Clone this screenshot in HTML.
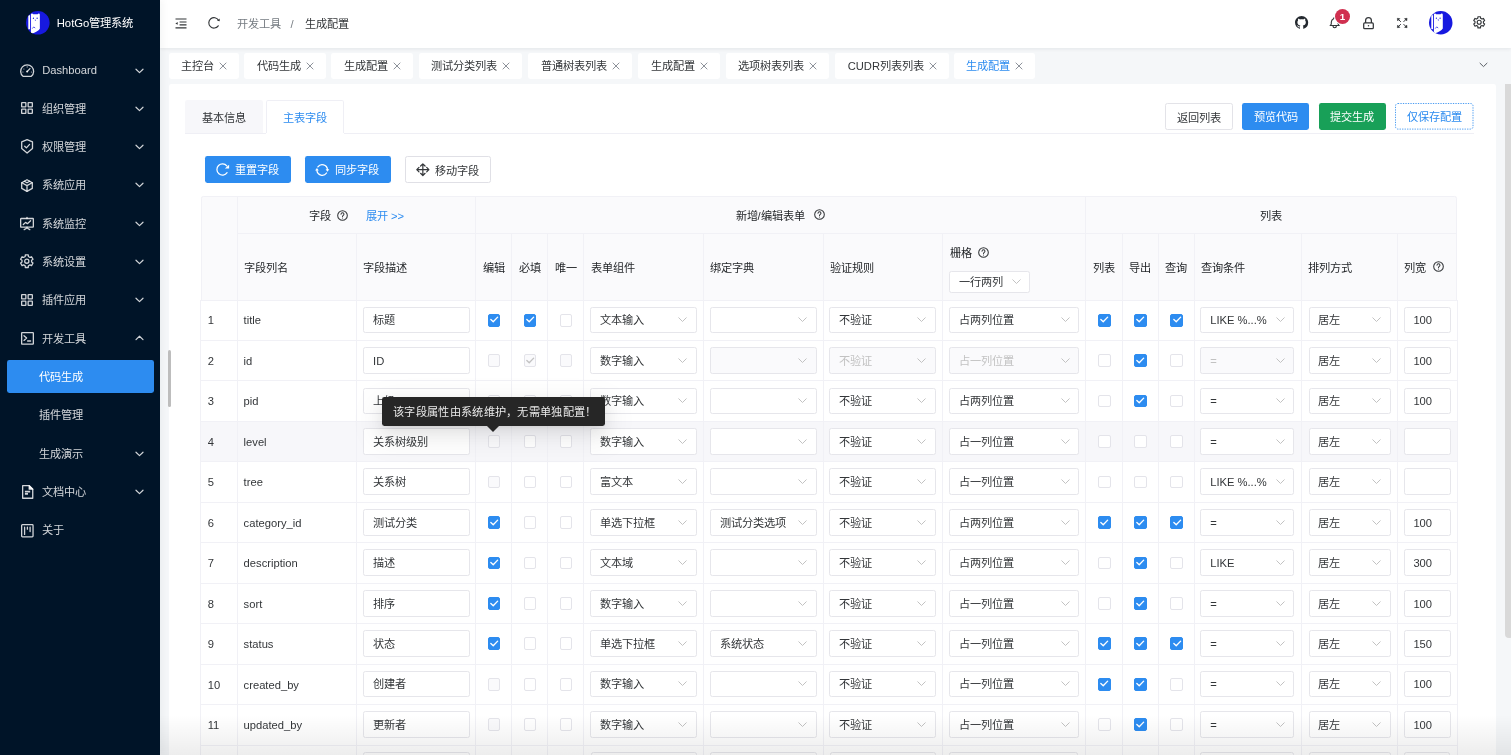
<!DOCTYPE html><html lang="zh-CN"><head><meta charset="utf-8"><style>
*{box-sizing:border-box;margin:0;padding:0}
html,body{width:1511px;height:755px;overflow:hidden}
body{position:relative;background:#f5f7f9;font-family:"Liberation Sans",sans-serif;font-size:11.2px;color:#333639;line-height:1}
.root{position:absolute;left:0;top:0;width:1511px;height:755px;overflow:hidden;will-change:transform}
.abs{position:absolute}
.t{position:absolute;white-space:nowrap;line-height:14px;margin-top:.5px}
svg{position:absolute;overflow:visible}
.sider{position:absolute;left:0;top:0;width:160px;height:755px;background:#001428;color:rgba(255,255,255,.82);box-shadow:2px 0 8px rgba(29,35,41,.05);z-index:3}
.mi{position:absolute;left:0;width:160px;height:33.6px;color:rgba(255,255,255,.82)}
.mi .t{top:9.8px}
.header{position:absolute;left:160px;top:0;width:1351px;height:48px;background:#fff;box-shadow:0 1px 4px rgba(0,21,41,.08);z-index:2}
.tag{position:absolute;top:53px;height:25.6px;background:#fff;border-radius:2.4px}
.card{position:absolute;left:169px;top:84px;width:1327px;height:700px;background:#fff;border-radius:2.4px}
.btn{position:absolute;height:26.6px;border-radius:2.4px;color:#fff}
.btn .t{top:6.2px}
.cell{position:absolute;border-right:1px solid #efeff5;border-bottom:1px solid #efeff5}
.inp{position:absolute;height:26.8px;border:1px solid #e6e6eb;border-radius:2.4px;background:#fff}
.inp.dis{background:#fafafc}
.inp .t{top:5.4px;left:8.8px}
.cb{position:absolute;width:12.8px;height:12.8px;border:1px solid #e4e4ea;border-radius:2px;background:#fff}
.cb.dis{background:#fafafc}
.cb.on{background:#2d8cf0;border-color:#2d8cf0}
</style></head><body><div class="root">
<div class="sider">
<svg style="left:26.2px;top:10.8px" width="23.6" height="23.6" viewBox="0 0 23.5 23.5"><defs><clipPath id="c26"><circle cx="11.75" cy="11.75" r="11.75"/></clipPath></defs><circle cx="11.75" cy="11.75" r="11.75" fill="#1719e0"/><g clip-path="url(#c26)"><rect x="2.3" y="4.2" width="1.9" height="14" fill="#fff"/><path d="M4.9 4.3 C4.6 2.6 6.4 2 7.2 3.2 L11.6 3.2 C12.3 2 14.1 2.5 13.8 4.3 L13.8 17.6 C12.5 19.8 9.5 21.2 5.5 22.6 L4.9 22.6 Z" fill="#fff"/><circle cx="7.4" cy="7.2" r=".65" fill="#1719e0"/><circle cx="11.1" cy="7.2" r=".65" fill="#1719e0"/><path d="M8.6 8.6 H9.9 L9.25 9.9Z" fill="#1719e0"/><rect x="4.4" y="4" width=".6" height="14.5" fill="#1719e0"/><path d="M6.3 17.5 Q7.6 14.5 9.2 17" stroke="#1719e0" stroke-width=".7" fill="none"/></g></svg>
<div class="t" style="left:56.7px;top:15.5px;color:#fff;font-size:11.3px">HotGo管理系统</div>
<svg style="left:20.1px;top:63.8px" width="14.3" height="13" viewBox="0 0 14.3 13"><path d="M3 12.35 A6.5 6.5 0 1 1 11.3 12.35 Z" stroke="rgba(255,255,255,.82)" stroke-width="1.3" fill="none" stroke-linecap="round" stroke-linejoin="round"/><path d="M7.15 7.6 L9.9 4.6" stroke="rgba(255,255,255,.82)" stroke-width="1.3" fill="none" stroke-linecap="round" stroke-linejoin="round"/><circle cx="7.15" cy="7.6" r="1" fill="rgba(255,255,255,.82)"/><circle cx="7.15" cy="2.9" r=".55" fill="rgba(255,255,255,.82)"/><circle cx="3.9" cy="5" r=".55" fill="rgba(255,255,255,.82)"/><circle cx="2.9" cy="8" r=".55" fill="rgba(255,255,255,.82)"/><circle cx="11.4" cy="8" r=".55" fill="rgba(255,255,255,.82)"/></svg>
<div class="t" style="left:42.2px;top:62.1px">Dashboard</div>
<svg style="left:135.4px;top:67.5px" width="9" height="6.5" viewBox="0 0 9 6.5"><path d="M1 1.2 L4.5 4.6 L8 1.2" stroke="rgba(255,255,255,.82)" stroke-width="1.2" fill="none" stroke-linecap="round" stroke-linejoin="round"/></svg>
<svg style="left:21.1px;top:102.1px" width="12.2" height="12.2" viewBox="0 0 12.2 12.2"><rect x=".65" y=".65" width="4.2" height="4.2" rx=".4" stroke="rgba(255,255,255,.82)" stroke-width="1.3" fill="none" stroke-linecap="round" stroke-linejoin="round"/><rect x="7.15" y=".65" width="4.2" height="4.2" rx=".4" stroke="rgba(255,255,255,.82)" stroke-width="1.3" fill="none" stroke-linecap="round" stroke-linejoin="round"/><rect x=".65" y="7.15" width="4.2" height="4.2" rx=".4" stroke="rgba(255,255,255,.82)" stroke-width="1.3" fill="none" stroke-linecap="round" stroke-linejoin="round"/><rect x="7.15" y="7.15" width="4.2" height="4.2" rx=".4" stroke="rgba(255,255,255,.82)" stroke-width="1.3" fill="none" stroke-linecap="round" stroke-linejoin="round"/></svg>
<div class="t" style="left:42.2px;top:101.3px">组织管理</div>
<svg style="left:135.4px;top:105.8px" width="9" height="6.5" viewBox="0 0 9 6.5"><path d="M1 1.2 L4.5 4.6 L8 1.2" stroke="rgba(255,255,255,.82)" stroke-width="1.2" fill="none" stroke-linecap="round" stroke-linejoin="round"/></svg>
<svg style="left:20.9px;top:139.2px" width="12.2" height="14.7" viewBox="0 0 12.2 14.7"><path d="M6.1 .7 L11.5 2.9 V9.6 L6.1 14 L.7 9.6 V2.9 Z" stroke="rgba(255,255,255,.82)" stroke-width="1.3" fill="none" stroke-linecap="round" stroke-linejoin="round"/><path d="M3.7 7.2 L5.4 8.9 L8.6 5.4" stroke="rgba(255,255,255,.82)" stroke-width="1.3" fill="none" stroke-linecap="round" stroke-linejoin="round"/></svg>
<div class="t" style="left:42.2px;top:139.6px">权限管理</div>
<svg style="left:135.4px;top:144.1px" width="9" height="6.5" viewBox="0 0 9 6.5"><path d="M1 1.2 L4.5 4.6 L8 1.2" stroke="rgba(255,255,255,.82)" stroke-width="1.2" fill="none" stroke-linecap="round" stroke-linejoin="round"/></svg>
<svg style="left:21.2px;top:178.5px" width="12" height="13.1" viewBox="0 0 12 13.1"><path d="M6 .7 L11.3 3.7 V9.4 L6 12.4 L.7 9.4 V3.7 Z" stroke="rgba(255,255,255,.82)" stroke-width="1.3" fill="none" stroke-linecap="round" stroke-linejoin="round"/><path d="M.9 3.8 L6 6.6 L11.1 3.8 M6 6.6 V12.2" stroke="rgba(255,255,255,.82)" stroke-width="1.3" fill="none" stroke-linecap="round" stroke-linejoin="round"/><path d="M3.3 2.3 L6 3.8 L8.7 2.3" stroke="rgba(255,255,255,.82)" stroke-width="1.3" fill="none" stroke-linecap="round" stroke-linejoin="round"/></svg>
<div class="t" style="left:42.2px;top:177.9px">系统应用</div>
<svg style="left:135.4px;top:182.4px" width="9" height="6.5" viewBox="0 0 9 6.5"><path d="M1 1.2 L4.5 4.6 L8 1.2" stroke="rgba(255,255,255,.82)" stroke-width="1.2" fill="none" stroke-linecap="round" stroke-linejoin="round"/></svg>
<svg style="left:20.4px;top:217.0px" width="14" height="13.2" viewBox="0 0 14 13.2"><rect x=".65" y="1.5" width="12.7" height="8.6" rx=".4" stroke="rgba(255,255,255,.82)" stroke-width="1.3" fill="none" stroke-linecap="round" stroke-linejoin="round"/><path d="M7 .5 V1.5 M7 10.1 V11.2 M4.2 12.6 L7 11 L9.8 12.6 M3.3 7.6 L5.6 5.4 L7.4 6.7 L10.6 3.7" stroke="rgba(255,255,255,.82)" stroke-width="1.3" fill="none" stroke-linecap="round" stroke-linejoin="round"/></svg>
<div class="t" style="left:42.2px;top:216.2px">系统监控</div>
<svg style="left:135.4px;top:220.7px" width="9" height="6.5" viewBox="0 0 9 6.5"><path d="M1 1.2 L4.5 4.6 L8 1.2" stroke="rgba(255,255,255,.82)" stroke-width="1.2" fill="none" stroke-linecap="round" stroke-linejoin="round"/></svg>
<svg style="left:20.4px;top:254.3px" width="13.6" height="14.3" viewBox="0 0 13.6 14.3"><path d="M5.20 2.52 L5.34 0.82 L8.26 0.82 L8.40 2.52 L10.01 3.45 L11.55 2.72 L13.02 5.25 L11.61 6.22 L11.61 8.08 L13.02 9.05 L11.55 11.58 L10.01 10.85 L8.40 11.78 L8.26 13.48 L5.34 13.48 L5.20 11.78 L3.59 10.85 L2.05 11.58 L0.58 9.05 L1.99 8.08 L1.99 6.22 L0.58 5.25 L2.05 2.72 L3.59 3.45Z" stroke="rgba(255,255,255,.82)" stroke-width="1.3" fill="none" stroke-linecap="round" stroke-linejoin="round"/><circle cx="6.8" cy="7.15" r="2.1" stroke="rgba(255,255,255,.82)" stroke-width="1.3" fill="none" stroke-linecap="round" stroke-linejoin="round"/></svg>
<div class="t" style="left:42.2px;top:254.5px">系统设置</div>
<svg style="left:135.4px;top:259.0px" width="9" height="6.5" viewBox="0 0 9 6.5"><path d="M1 1.2 L4.5 4.6 L8 1.2" stroke="rgba(255,255,255,.82)" stroke-width="1.2" fill="none" stroke-linecap="round" stroke-linejoin="round"/></svg>
<svg style="left:21.1px;top:294.3px" width="12.2" height="12.2" viewBox="0 0 12.2 12.2"><rect x=".65" y=".65" width="4.2" height="4.2" rx=".4" stroke="rgba(255,255,255,.82)" stroke-width="1.3" fill="none" stroke-linecap="round" stroke-linejoin="round"/><rect x="7.15" y=".65" width="4.2" height="4.2" rx=".4" stroke="rgba(255,255,255,.82)" stroke-width="1.3" fill="none" stroke-linecap="round" stroke-linejoin="round"/><rect x=".65" y="7.15" width="4.2" height="4.2" rx=".4" stroke="rgba(255,255,255,.82)" stroke-width="1.3" fill="none" stroke-linecap="round" stroke-linejoin="round"/><rect x="7.15" y="7.15" width="4.2" height="4.2" rx=".4" stroke="rgba(255,255,255,.82)" stroke-width="1.3" fill="none" stroke-linecap="round" stroke-linejoin="round"/></svg>
<div class="t" style="left:42.2px;top:292.8px">插件应用</div>
<svg style="left:135.4px;top:297.3px" width="9" height="6.5" viewBox="0 0 9 6.5"><path d="M1 1.2 L4.5 4.6 L8 1.2" stroke="rgba(255,255,255,.82)" stroke-width="1.2" fill="none" stroke-linecap="round" stroke-linejoin="round"/></svg>
<svg style="left:20.8px;top:332.2px" width="13" height="12.8" viewBox="0 0 13 12.8"><rect x=".65" y=".65" width="11.7" height="11.5" rx=".5" stroke="rgba(255,255,255,.82)" stroke-width="1.3" fill="none" stroke-linecap="round" stroke-linejoin="round"/><path d="M3 3.8 L5.6 6.1 L3 8.4 M6.6 9 H9.6" stroke="rgba(255,255,255,.82)" stroke-width="1.3" fill="none" stroke-linecap="round" stroke-linejoin="round"/></svg>
<div class="t" style="left:42.2px;top:331.1px">开发工具</div>
<svg style="left:135.4px;top:335.3px" width="9" height="6.5" viewBox="0 0 9 6.5"><path d="M1 4.6 L4.5 1.2 L8 4.6" stroke="rgba(255,255,255,.82)" stroke-width="1.2" fill="none" stroke-linecap="round" stroke-linejoin="round"/></svg>
<div class="abs" style="left:6.9px;top:360px;width:147px;height:33.2px;background:#2d8cf0;border-radius:2.4px"></div>
<div class="t" style="left:38.8px;top:369.4px;color:#fff">代码生成</div>
<div class="t" style="left:38.8px;top:407.7px">插件管理</div>
<div class="t" style="left:38.8px;top:446.0px">生成演示</div>
<svg style="left:135.4px;top:450.5px" width="9" height="6.5" viewBox="0 0 9 6.5"><path d="M1 1.2 L4.5 4.6 L8 1.2" stroke="rgba(255,255,255,.82)" stroke-width="1.2" fill="none" stroke-linecap="round" stroke-linejoin="round"/></svg>
<svg style="left:21.7px;top:485.2px" width="11.4" height="13.9" viewBox="0 0 11.4 13.9"><path d="M.65 .65 H7.2 L10.75 4.2 V13.25 H.65 Z" stroke="rgba(255,255,255,.82)" stroke-width="1.3" fill="none" stroke-linecap="round" stroke-linejoin="round"/><path d="M7.2 .65 V4.2 H10.75 Z" fill="rgba(255,255,255,.82)" stroke="rgba(255,255,255,.82)" stroke-width="1.3" fill="none" stroke-linecap="round" stroke-linejoin="round"/><path d="M2.9 6.6 H8.2 M2.9 8.9 H6" stroke="rgba(255,255,255,.82)" stroke-width="1.6"/></svg>
<div class="t" style="left:42.2px;top:484.3px">文档中心</div>
<svg style="left:135.4px;top:488.8px" width="9" height="6.5" viewBox="0 0 9 6.5"><path d="M1 1.2 L4.5 4.6 L8 1.2" stroke="rgba(255,255,255,.82)" stroke-width="1.2" fill="none" stroke-linecap="round" stroke-linejoin="round"/></svg>
<svg style="left:20.9px;top:523.7px" width="12.7" height="13.5" viewBox="0 0 12.7 13.5"><rect x=".65" y=".65" width="11.4" height="12.2" rx=".8" stroke="rgba(255,255,255,.82)" stroke-width="1.3" fill="none" stroke-linecap="round" stroke-linejoin="round"/><path d="M3.6 3.2 V10.4 M6.4 3.2 V5.2 M9.1 3.2 V7.6" stroke="rgba(255,255,255,.82)" stroke-width="1.3" fill="none" stroke-linecap="round" stroke-linejoin="round"/></svg>
<div class="t" style="left:42.2px;top:522.6px">关于</div>
</div>
<div class="header">
<svg style="left:14.5px;top:17.5px" width="12" height="11" viewBox="0 0 12 11"><path d="M.5 1H11.5M4.6 3.95H11.5M4.6 6.9H11.5M.5 9.9H11.5" stroke="#333639" stroke-width="1.1" fill="none"/><path d="M.4 5.45 L2.7 4.1 V6.8Z" fill="#333639"/></svg>
<svg style="left:47px;top:16px" width="14" height="14" viewBox="0 0 14 14"><path d="M11.5 4.25 A5.2 5.2 0 1 0 11.26 9.83" stroke="#333639" stroke-width="1.15" fill="none" stroke-linecap="round"/><path d="M10 4.7 L12.7 2.5 L12.7 5.3Z" fill="#333639"/></svg>
<div class="t" style="left:77.1px;top:16px;color:#767c82">开发工具</div>
<div class="t" style="left:130.5px;top:16px;color:#767c82">/</div>
<div class="t" style="left:145px;top:16px;color:#333639">生成配置</div>
<svg style="left:1134.8px;top:16.1px" width="13.2" height="13.2" viewBox="0 0 16 16"><path fill="#24292f" d="M8 0C3.58 0 0 3.58 0 8c0 3.54 2.29 6.53 5.47 7.59.4.07.55-.17.55-.38 0-.19-.01-.82-.01-1.49-2.01.37-2.53-.49-2.69-.94-.09-.23-.48-.94-.82-1.13-.28-.15-.68-.52-.01-.53.63-.01 1.08.58 1.23.82.72 1.21 1.87.87 2.33.66.07-.52.28-.87.51-1.07-1.78-.2-3.64-.89-3.64-3.95 0-.87.31-1.59.82-2.15-.08-.2-.36-1.02.08-2.12 0 0 .67-.21 2.2.82.64-.18 1.32-.27 2-.27.68 0 1.36.09 2 .27 1.53-1.04 2.2-.82 2.2-.82.44 1.1.16 1.92.08 2.12.51.56.82 1.27.82 2.15 0 3.07-1.87 3.75-3.65 3.95.29.25.54.73.54 1.48 0 1.07-.01 1.93-.01 2.2 0 .21.15.46.55.38A8.013 8.013 0 0016 8c0-4.42-3.58-8-8-8z"/></svg>
<svg style="left:1168.6px;top:17.4px" width="11.4" height="11.6" viewBox="3 2 18 20.5"><path d="M10 5a2 2 0 1 1 4 0a7 7 0 0 1 4 6v3a4 4 0 0 0 2 3h-16a4 4 0 0 0 2 -3v-3a7 7 0 0 1 4 -6" stroke="#333639" stroke-width="2" fill="none" stroke-linecap="round" stroke-linejoin="round"/><path d="M9 17v1a3 3 0 0 0 6 0v-1" stroke="#333639" stroke-width="2" fill="none" stroke-linecap="round" stroke-linejoin="round"/></svg>
<div class="abs" style="left:1174.9px;top:9.4px;width:15px;height:15px;border-radius:50%;background:#d03050;color:#fff;font-size:9.8px;font-weight:bold;text-align:center;line-height:15px;box-shadow:0 0 0 1px #fff">1</div>
<svg style="left:1203px;top:16.8px" width="11" height="12.4" viewBox="0 0 11 12.4"><rect x=".7" y="5.9" width="9.6" height="5.8" rx="1" stroke="#333639" stroke-width="1.25" fill="none"/><path d="M2.6 5.9 V3.6 A2.9 2.9 0 0 1 8.4 3.6 V5.9" stroke="#333639" stroke-width="1.25" fill="none"/><circle cx="5.5" cy="8.8" r=".75" fill="#333639"/></svg>
<svg style="left:1237px;top:17.9px" width="10.4" height="10" viewBox="0 0 10.4 10"><path d="M.3 .3 L2.9 .6 L.6 2.9Z M10.1 .3 L7.5 .6 L9.8 2.9Z M.3 9.7 L2.9 9.4 L.6 7.1Z M10.1 9.7 L7.5 9.4 L9.8 7.1Z" fill="#333639" stroke="#333639" stroke-width=".5" stroke-linejoin="round"/><path d="M1.2 1.2 L3.6 3.6 M9.2 1.2 L6.8 3.6 M1.2 8.8 L3.6 6.4 M9.2 8.8 L6.8 6.4" stroke="#333639" stroke-width="1" fill="none" stroke-linecap="round"/></svg>
<svg style="left:1269.0px;top:10.6px" width="23.5" height="23.5" viewBox="0 0 23.5 23.5"><defs><clipPath id="c1269"><circle cx="11.75" cy="11.75" r="11.75"/></clipPath></defs><circle cx="11.75" cy="11.75" r="11.75" fill="#1719e0"/><g clip-path="url(#c1269)"><rect x="2.3" y="4.2" width="1.9" height="14" fill="#fff"/><path d="M4.9 4.3 C4.6 2.6 6.4 2 7.2 3.2 L11.6 3.2 C12.3 2 14.1 2.5 13.8 4.3 L13.8 17.6 C12.5 19.8 9.5 21.2 5.5 22.6 L4.9 22.6 Z" fill="#fff"/><circle cx="7.4" cy="7.2" r=".65" fill="#1719e0"/><circle cx="11.1" cy="7.2" r=".65" fill="#1719e0"/><path d="M8.6 8.6 H9.9 L9.25 9.9Z" fill="#1719e0"/><rect x="4.4" y="4" width=".6" height="14.5" fill="#1719e0"/><path d="M6.3 17.5 Q7.6 14.5 9.2 17" stroke="#1719e0" stroke-width=".7" fill="none"/></g></svg>
<svg style="left:1312.6px;top:16.4px" width="12.4" height="12.6" viewBox="0 0 12.4 12.6"><path d="M4.80 2.23 L4.92 0.75 L7.48 0.75 L7.60 2.23 L9.02 3.05 L10.37 2.41 L11.65 4.63 L10.42 5.48 L10.42 7.12 L11.65 7.97 L10.37 10.19 L9.02 9.55 L7.60 10.37 L7.48 11.85 L4.92 11.85 L4.80 10.37 L3.38 9.55 L2.03 10.19 L0.75 7.97 L1.98 7.12 L1.98 5.48 L0.75 4.63 L2.03 2.41 L3.38 3.05Z" stroke="#333639" stroke-width="1.15" fill="none" stroke-linejoin="round"/><circle cx="6.2" cy="6.3" r="2" stroke="#333639" stroke-width="1.15" fill="none"/></svg>
</div>
<div class="tag" style="left:168.5px;display:flex;align-items:center;padding:0 12.2px 0 12.7px;color:#333639"><span style="line-height:14px;white-space:nowrap">主控台</span>
<svg style="position:relative;margin-left:5px;top:0.6px" width="8" height="8" viewBox="0 0 8 8"><path d="M.7 .7L7.3 7.3M7.3 .7L.7 7.3" stroke="#80868e" stroke-width=".9" fill="none"/></svg>
</div>
<div class="tag" style="left:244.2px;display:flex;align-items:center;padding:0 12.2px 0 12.7px;color:#333639"><span style="line-height:14px;white-space:nowrap">代码生成</span>
<svg style="position:relative;margin-left:5px;top:0.6px" width="8" height="8" viewBox="0 0 8 8"><path d="M.7 .7L7.3 7.3M7.3 .7L.7 7.3" stroke="#80868e" stroke-width=".9" fill="none"/></svg>
</div>
<div class="tag" style="left:331.3px;display:flex;align-items:center;padding:0 12.2px 0 12.7px;color:#333639"><span style="line-height:14px;white-space:nowrap">生成配置</span>
<svg style="position:relative;margin-left:5px;top:0.6px" width="8" height="8" viewBox="0 0 8 8"><path d="M.7 .7L7.3 7.3M7.3 .7L.7 7.3" stroke="#80868e" stroke-width=".9" fill="none"/></svg>
</div>
<div class="tag" style="left:418.6px;display:flex;align-items:center;padding:0 12.2px 0 12.7px;color:#333639"><span style="line-height:14px;white-space:nowrap">测试分类列表</span>
<svg style="position:relative;margin-left:5px;top:0.6px" width="8" height="8" viewBox="0 0 8 8"><path d="M.7 .7L7.3 7.3M7.3 .7L.7 7.3" stroke="#80868e" stroke-width=".9" fill="none"/></svg>
</div>
<div class="tag" style="left:528.0px;display:flex;align-items:center;padding:0 12.2px 0 12.7px;color:#333639"><span style="line-height:14px;white-space:nowrap">普通树表列表</span>
<svg style="position:relative;margin-left:5px;top:0.6px" width="8" height="8" viewBox="0 0 8 8"><path d="M.7 .7L7.3 7.3M7.3 .7L.7 7.3" stroke="#80868e" stroke-width=".9" fill="none"/></svg>
</div>
<div class="tag" style="left:638.1px;display:flex;align-items:center;padding:0 12.2px 0 12.7px;color:#333639"><span style="line-height:14px;white-space:nowrap">生成配置</span>
<svg style="position:relative;margin-left:5px;top:0.6px" width="8" height="8" viewBox="0 0 8 8"><path d="M.7 .7L7.3 7.3M7.3 .7L.7 7.3" stroke="#80868e" stroke-width=".9" fill="none"/></svg>
</div>
<div class="tag" style="left:725.5px;display:flex;align-items:center;padding:0 12.2px 0 12.7px;color:#333639"><span style="line-height:14px;white-space:nowrap">选项树表列表</span>
<svg style="position:relative;margin-left:5px;top:0.6px" width="8" height="8" viewBox="0 0 8 8"><path d="M.7 .7L7.3 7.3M7.3 .7L.7 7.3" stroke="#80868e" stroke-width=".9" fill="none"/></svg>
</div>
<div class="tag" style="left:835.0px;display:flex;align-items:center;padding:0 12.2px 0 12.7px;color:#333639"><span style="line-height:14px;white-space:nowrap">CUDR列表列表</span>
<svg style="position:relative;margin-left:5px;top:0.6px" width="8" height="8" viewBox="0 0 8 8"><path d="M.7 .7L7.3 7.3M7.3 .7L.7 7.3" stroke="#80868e" stroke-width=".9" fill="none"/></svg>
</div>
<div class="tag" style="left:953.5px;display:flex;align-items:center;padding:0 12.2px 0 12.7px;color:#2d8cf0"><span style="line-height:14px;white-space:nowrap">生成配置</span>
<svg style="position:relative;margin-left:5px;top:0.6px" width="8" height="8" viewBox="0 0 8 8"><path d="M.7 .7L7.3 7.3M7.3 .7L.7 7.3" stroke="#80868e" stroke-width=".9" fill="none"/></svg>
</div>
<svg style="left:1479.0px;top:62.0px" width="9" height="6.5" viewBox="0 0 9 6.5"><path d="M1 1.2 L4.5 4.6 L8 1.2" stroke="#5a5f66" stroke-width="1" fill="none" stroke-linecap="round" stroke-linejoin="round"/></svg>
<div class="card"></div>
<div class="abs" style="left:184.5px;top:100.2px;width:78.7px;height:33.5px;background:#f7f7fa;border-radius:2.4px 2.4px 0 0"></div>
<div class="t" style="left:201.7px;top:110px">基本信息</div>
<div class="abs" style="left:265.5px;top:100.2px;width:78.2px;height:34px;background:#fff;border:1px solid #efeff5;border-bottom:none;border-radius:2.4px 2.4px 0 0"></div>
<div class="t" style="left:282.9px;top:110px;color:#2d8cf0">主表字段</div>
<div class="abs" style="left:184.5px;top:133px;width:1289.5px;height:1px;background:#efeff5"></div>
<div class="abs" style="left:265.5px;top:133px;width:78.2px;height:1.5px;background:#fff"></div>
<div class="btn" style="left:1165.3px;top:103.3px;width:67.3px;background:#fff;color:#333639;border:1px solid #e3e3e8;"><div class="t" style="left:0;right:0;text-align:center">返回列表</div></div>
<div class="btn" style="left:1241.9px;top:103.3px;width:67.5px;background:#2d8cf0;color:#fff;"><div class="t" style="left:0;right:0;text-align:center">预览代码</div></div>
<div class="btn" style="left:1318.5px;top:103.3px;width:67.5px;background:#18a058;color:#fff;"><div class="t" style="left:0;right:0;text-align:center">提交生成</div></div>
<div class="btn" style="left:1395.2px;top:103.3px;width:78.5px;background:#fff;color:#2d8cf0;"><svg style="left:0;top:0" width="78.5" height="26.6"><rect x=".5" y=".5" width="77.5" height="25.6" rx="2.4" stroke="#2d8cf0" stroke-width="1" fill="none" stroke-dasharray="1.3 1.2" opacity=".85"/></svg><div class="t" style="left:0;right:0;text-align:center">仅保存配置</div></div>
<div class="btn" style="left:204.9px;top:156px;width:86px;background:#2d8cf0"><svg style="left:11.1px;top:7px" width="13.5" height="13.5" viewBox="0 0 13.5 13.5"><path d="M10.79 2.9 A5.6 5.6 0 1 0 11.09 9.71" stroke="#fff" stroke-width="1.25" fill="none" stroke-linecap="round"/><path d="M8.9 5.5 L13.1 1.8 L13.1 5.5Z" fill="#fff"/></svg><div class="t" style="left:30.6px;top:6.8px">重置字段</div></div>
<div class="btn" style="left:304.7px;top:156px;width:86px;background:#2d8cf0"><svg style="left:10.8px;top:6.5px" width="14.5" height="14" viewBox="0 0 14.5 14"><path d="M2.86 3.91 A5.3 5.3 0 0 1 12.48 6.49 M11.54 9.99 A5.3 5.3 0 0 1 1.92 7.41" stroke="#fff" stroke-width="1.25" fill="none" stroke-linecap="round"/><path d="M10.6 6.3 L14.3 6.3 L12.45 8.8Z M0.1 7.6 L3.8 7.6 L1.95 5.1Z" fill="#fff"/></svg><div class="t" style="left:30.6px;top:6.8px">同步字段</div></div>
<div class="btn" style="left:404.5px;top:156px;width:86.5px;background:#fff;border:1px solid #e0e0e6;color:#333639"><svg style="left:10.5px;top:5.8px" width="13.7" height="13.3" viewBox="0 0 13.7 13.3"><path d="M6.85 .8 V12.5 M.8 6.65 H12.9 M4.6 3 L6.85 .8 L9.1 3 M4.6 10.3 L6.85 12.5 L9.1 10.3 M3 4.4 L.8 6.65 L3 8.9 M10.7 4.4 L12.9 6.65 L10.7 8.9" stroke="#333639" stroke-width="1.2" fill="none" stroke-linecap="round" stroke-linejoin="round"/></svg><div class="t" style="left:29.6px;top:6.3px">移动字段</div></div>
<div class="abs" style="left:200.5px;top:196.3px;width:1256.5px;height:104.7px;background:#fafafc;border:1px solid #f1f1f6;border-radius:2.4px 2.4px 0 0"></div>
<div class="abs" style="left:236.5px;top:196.3px;width:1px;height:103.7px;background:#f1f1f6"></div>
<div class="abs" style="left:356.0px;top:233.5px;width:1px;height:66.5px;background:#f1f1f6"></div>
<div class="abs" style="left:475.0px;top:196.3px;width:1px;height:103.7px;background:#f1f1f6"></div>
<div class="abs" style="left:511.0px;top:233.5px;width:1px;height:66.5px;background:#f1f1f6"></div>
<div class="abs" style="left:547.0px;top:233.5px;width:1px;height:66.5px;background:#f1f1f6"></div>
<div class="abs" style="left:583.1px;top:233.5px;width:1px;height:66.5px;background:#f1f1f6"></div>
<div class="abs" style="left:703.0px;top:233.5px;width:1px;height:66.5px;background:#f1f1f6"></div>
<div class="abs" style="left:822.5px;top:233.5px;width:1px;height:66.5px;background:#f1f1f6"></div>
<div class="abs" style="left:942.1px;top:233.5px;width:1px;height:66.5px;background:#f1f1f6"></div>
<div class="abs" style="left:1085.3px;top:196.3px;width:1px;height:103.7px;background:#f1f1f6"></div>
<div class="abs" style="left:1121.7px;top:233.5px;width:1px;height:66.5px;background:#f1f1f6"></div>
<div class="abs" style="left:1157.7px;top:233.5px;width:1px;height:66.5px;background:#f1f1f6"></div>
<div class="abs" style="left:1193.9px;top:233.5px;width:1px;height:66.5px;background:#f1f1f6"></div>
<div class="abs" style="left:1300.8px;top:233.5px;width:1px;height:66.5px;background:#f1f1f6"></div>
<div class="abs" style="left:1396.7px;top:233.5px;width:1px;height:66.5px;background:#f1f1f6"></div>
<div class="abs" style="left:237.0px;top:233.0px;width:1220.0px;height:1px;background:#f1f1f6"></div>
<div class="abs" style="left:200.5px;top:299.5px;width:1256.5px;height:1px;background:#f1f1f6"></div>
<div class="t" style="left:308.5px;top:208.5px;color:#1f2225;font-weight:500">字段</div>
<svg style="left:337.0px;top:209.5px" width="11" height="11" viewBox="0 0 24 24"><circle cx="12" cy="12" r="10.5" stroke="#333639" stroke-width="2.3" fill="none"/><path d="M8.8 9.2A3.2 3.2 0 0 1 15.2 9.4c0 2.2-3.2 2.4-3.2 4.8" stroke="#333639" stroke-width="2.2" fill="none" stroke-linecap="round"/><circle cx="12" cy="17.5" r="1.2" fill="#333639"/></svg>
<div class="t" style="left:365.8px;top:208.5px;color:#2d8cf0">展开 &gt;&gt;</div>
<div class="t" style="left:735.5px;top:208.5px;color:#1f2225;font-weight:500">新增/编辑表单</div>
<svg style="left:813.8px;top:208.9px" width="11" height="11" viewBox="0 0 24 24"><circle cx="12" cy="12" r="10.5" stroke="#333639" stroke-width="2.3" fill="none"/><path d="M8.8 9.2A3.2 3.2 0 0 1 15.2 9.4c0 2.2-3.2 2.4-3.2 4.8" stroke="#333639" stroke-width="2.2" fill="none" stroke-linecap="round"/><circle cx="12" cy="17.5" r="1.2" fill="#333639"/></svg>
<div class="t" style="left:1260px;top:208.5px;color:#1f2225;font-weight:500">列表</div>
<div class="t" style="left:243.6px;top:260px;color:#1f2225;font-weight:500">字段列名</div>
<div class="t" style="left:363.0px;top:260px;color:#1f2225;font-weight:500">字段描述</div>
<div class="t" style="left:483.3px;top:260px;color:#1f2225;font-weight:500">编辑</div>
<div class="t" style="left:519.3px;top:260px;color:#1f2225;font-weight:500">必填</div>
<div class="t" style="left:555.0px;top:260px;color:#1f2225;font-weight:500">唯一</div>
<div class="t" style="left:590.5px;top:260px;color:#1f2225;font-weight:500">表单组件</div>
<div class="t" style="left:710.0px;top:260px;color:#1f2225;font-weight:500">绑定字典</div>
<div class="t" style="left:829.5px;top:260px;color:#1f2225;font-weight:500">验证规则</div>
<div class="t" style="left:1092.5px;top:260px;color:#1f2225;font-weight:500">列表</div>
<div class="t" style="left:1128.5px;top:260px;color:#1f2225;font-weight:500">导出</div>
<div class="t" style="left:1165.0px;top:260px;color:#1f2225;font-weight:500">查询</div>
<div class="t" style="left:1200.8px;top:260px;color:#1f2225;font-weight:500">查询条件</div>
<div class="t" style="left:1308.0px;top:260px;color:#1f2225;font-weight:500">排列方式</div>
<div class="t" style="left:1403.8px;top:260px;color:#1f2225;font-weight:500">列宽</div>
<svg style="left:1432.5px;top:261.3px" width="11" height="11" viewBox="0 0 24 24"><circle cx="12" cy="12" r="10.5" stroke="#333639" stroke-width="2.3" fill="none"/><path d="M8.8 9.2A3.2 3.2 0 0 1 15.2 9.4c0 2.2-3.2 2.4-3.2 4.8" stroke="#333639" stroke-width="2.2" fill="none" stroke-linecap="round"/><circle cx="12" cy="17.5" r="1.2" fill="#333639"/></svg>
<div class="t" style="left:949.5px;top:245.5px;color:#1f2225;font-weight:500">栅格</div>
<svg style="left:977.5px;top:246.8px" width="11" height="11" viewBox="0 0 24 24"><circle cx="12" cy="12" r="10.5" stroke="#333639" stroke-width="2.3" fill="none"/><path d="M8.8 9.2A3.2 3.2 0 0 1 15.2 9.4c0 2.2-3.2 2.4-3.2 4.8" stroke="#333639" stroke-width="2.2" fill="none" stroke-linecap="round"/><circle cx="12" cy="17.5" r="1.2" fill="#333639"/></svg>
<div class="inp" style="left:949.3px;top:270.6px;width:80.7px;height:22.0px"><div class="t" style="color:#333639;top:3.0px">一行两列</div><svg style="right:8.3px;top:7.5px" width="9" height="5" viewBox="0 0 9 5"><path d="M0.5 0.5 L4.5 4.5 L8.5 0.5" stroke="#c2c2c2" stroke-width="1" fill="none"/></svg></div>
<div class="abs" style="left:200.0px;top:300.0px;width:1px;height:40.4px;background:#f1f1f6"></div>
<div class="abs" style="left:236.5px;top:300.0px;width:1px;height:40.4px;background:#f1f1f6"></div>
<div class="abs" style="left:356.0px;top:300.0px;width:1px;height:40.4px;background:#f1f1f6"></div>
<div class="abs" style="left:475.0px;top:300.0px;width:1px;height:40.4px;background:#f1f1f6"></div>
<div class="abs" style="left:511.0px;top:300.0px;width:1px;height:40.4px;background:#f1f1f6"></div>
<div class="abs" style="left:547.0px;top:300.0px;width:1px;height:40.4px;background:#f1f1f6"></div>
<div class="abs" style="left:583.1px;top:300.0px;width:1px;height:40.4px;background:#f1f1f6"></div>
<div class="abs" style="left:703.0px;top:300.0px;width:1px;height:40.4px;background:#f1f1f6"></div>
<div class="abs" style="left:822.5px;top:300.0px;width:1px;height:40.4px;background:#f1f1f6"></div>
<div class="abs" style="left:942.1px;top:300.0px;width:1px;height:40.4px;background:#f1f1f6"></div>
<div class="abs" style="left:1085.3px;top:300.0px;width:1px;height:40.4px;background:#f1f1f6"></div>
<div class="abs" style="left:1121.7px;top:300.0px;width:1px;height:40.4px;background:#f1f1f6"></div>
<div class="abs" style="left:1157.7px;top:300.0px;width:1px;height:40.4px;background:#f1f1f6"></div>
<div class="abs" style="left:1193.9px;top:300.0px;width:1px;height:40.4px;background:#f1f1f6"></div>
<div class="abs" style="left:1300.8px;top:300.0px;width:1px;height:40.4px;background:#f1f1f6"></div>
<div class="abs" style="left:1396.7px;top:300.0px;width:1px;height:40.4px;background:#f1f1f6"></div>
<div class="abs" style="left:1456.5px;top:300.0px;width:1px;height:40.4px;background:#f1f1f6"></div>
<div class="abs" style="left:200.5px;top:339.9px;width:1256.5px;height:1px;background:#f1f1f6"></div>
<div class="t" style="left:207.7px;top:312.9px">1</div>
<div class="t" style="left:243.6px;top:312.9px">title</div>
<div class="inp" style="left:363.3px;top:306.6px;width:106.3px"><div class="t">标题</div></div>
<div class="cb on" style="left:487.6px;top:313.8px"><svg style="left:1.2px;top:1.5px" width="8.5" height="7" viewBox="0 0 10 8"><path d="M1 4 L3.8 6.6 L9 1.2" stroke="#fff" stroke-width="1.6" fill="none" stroke-linecap="round" stroke-linejoin="round"/></svg></div>
<div class="cb on" style="left:523.6px;top:313.8px"><svg style="left:1.2px;top:1.5px" width="8.5" height="7" viewBox="0 0 10 8"><path d="M1 4 L3.8 6.6 L9 1.2" stroke="#fff" stroke-width="1.6" fill="none" stroke-linecap="round" stroke-linejoin="round"/></svg></div>
<div class="cb" style="left:559.6px;top:313.8px"></div>
<div class="inp" style="left:590.1px;top:306.6px;width:106.5px;height:26.8px"><div class="t" style="color:#333639;top:5.4px">文本输入</div><svg style="right:8.3px;top:9.9px" width="9" height="5" viewBox="0 0 9 5"><path d="M0.5 0.5 L4.5 4.5 L8.5 0.5" stroke="#c2c2c2" stroke-width="1" fill="none"/></svg></div>
<div class="inp" style="left:710.0px;top:306.6px;width:106.5px;height:26.8px"><svg style="right:8.3px;top:9.9px" width="9" height="5" viewBox="0 0 9 5"><path d="M0.5 0.5 L4.5 4.5 L8.5 0.5" stroke="#c2c2c2" stroke-width="1" fill="none"/></svg></div>
<div class="inp" style="left:829.1px;top:306.6px;width:106.5px;height:26.8px"><div class="t" style="color:#333639;top:5.4px">不验证</div><svg style="right:8.3px;top:9.9px" width="9" height="5" viewBox="0 0 9 5"><path d="M0.5 0.5 L4.5 4.5 L8.5 0.5" stroke="#c2c2c2" stroke-width="1" fill="none"/></svg></div>
<div class="inp" style="left:949.3px;top:306.6px;width:129.7px;height:26.8px"><div class="t" style="color:#333639;top:5.4px">占两列位置</div><svg style="right:8.3px;top:9.9px" width="9" height="5" viewBox="0 0 9 5"><path d="M0.5 0.5 L4.5 4.5 L8.5 0.5" stroke="#c2c2c2" stroke-width="1" fill="none"/></svg></div>
<div class="cb on" style="left:1098.1px;top:313.8px"><svg style="left:1.2px;top:1.5px" width="8.5" height="7" viewBox="0 0 10 8"><path d="M1 4 L3.8 6.6 L9 1.2" stroke="#fff" stroke-width="1.6" fill="none" stroke-linecap="round" stroke-linejoin="round"/></svg></div>
<div class="cb on" style="left:1134.3px;top:313.8px"><svg style="left:1.2px;top:1.5px" width="8.5" height="7" viewBox="0 0 10 8"><path d="M1 4 L3.8 6.6 L9 1.2" stroke="#fff" stroke-width="1.6" fill="none" stroke-linecap="round" stroke-linejoin="round"/></svg></div>
<div class="cb on" style="left:1170.4px;top:313.8px"><svg style="left:1.2px;top:1.5px" width="8.5" height="7" viewBox="0 0 10 8"><path d="M1 4 L3.8 6.6 L9 1.2" stroke="#fff" stroke-width="1.6" fill="none" stroke-linecap="round" stroke-linejoin="round"/></svg></div>
<div class="inp" style="left:1200.4px;top:306.6px;width:94.1px;height:26.8px"><div class="t" style="color:#333639;top:5.4px">LIKE %...%</div><svg style="right:8.3px;top:9.9px" width="9" height="5" viewBox="0 0 9 5"><path d="M0.5 0.5 L4.5 4.5 L8.5 0.5" stroke="#c2c2c2" stroke-width="1" fill="none"/></svg></div>
<div class="inp" style="left:1308.5px;top:306.6px;width:82.0px;height:26.8px"><div class="t" style="color:#333639;top:5.4px">居左</div><svg style="right:8.3px;top:9.9px" width="9" height="5" viewBox="0 0 9 5"><path d="M0.5 0.5 L4.5 4.5 L8.5 0.5" stroke="#c2c2c2" stroke-width="1" fill="none"/></svg></div>
<div class="inp" style="left:1403.6px;top:306.6px;width:47.2px"><div class="t">100</div></div>
<div class="abs" style="left:200.0px;top:340.4px;width:1px;height:40.4px;background:#f1f1f6"></div>
<div class="abs" style="left:236.5px;top:340.4px;width:1px;height:40.4px;background:#f1f1f6"></div>
<div class="abs" style="left:356.0px;top:340.4px;width:1px;height:40.4px;background:#f1f1f6"></div>
<div class="abs" style="left:475.0px;top:340.4px;width:1px;height:40.4px;background:#f1f1f6"></div>
<div class="abs" style="left:511.0px;top:340.4px;width:1px;height:40.4px;background:#f1f1f6"></div>
<div class="abs" style="left:547.0px;top:340.4px;width:1px;height:40.4px;background:#f1f1f6"></div>
<div class="abs" style="left:583.1px;top:340.4px;width:1px;height:40.4px;background:#f1f1f6"></div>
<div class="abs" style="left:703.0px;top:340.4px;width:1px;height:40.4px;background:#f1f1f6"></div>
<div class="abs" style="left:822.5px;top:340.4px;width:1px;height:40.4px;background:#f1f1f6"></div>
<div class="abs" style="left:942.1px;top:340.4px;width:1px;height:40.4px;background:#f1f1f6"></div>
<div class="abs" style="left:1085.3px;top:340.4px;width:1px;height:40.4px;background:#f1f1f6"></div>
<div class="abs" style="left:1121.7px;top:340.4px;width:1px;height:40.4px;background:#f1f1f6"></div>
<div class="abs" style="left:1157.7px;top:340.4px;width:1px;height:40.4px;background:#f1f1f6"></div>
<div class="abs" style="left:1193.9px;top:340.4px;width:1px;height:40.4px;background:#f1f1f6"></div>
<div class="abs" style="left:1300.8px;top:340.4px;width:1px;height:40.4px;background:#f1f1f6"></div>
<div class="abs" style="left:1396.7px;top:340.4px;width:1px;height:40.4px;background:#f1f1f6"></div>
<div class="abs" style="left:1456.5px;top:340.4px;width:1px;height:40.4px;background:#f1f1f6"></div>
<div class="abs" style="left:200.5px;top:380.4px;width:1256.5px;height:1px;background:#f1f1f6"></div>
<div class="t" style="left:207.7px;top:353.4px">2</div>
<div class="t" style="left:243.6px;top:353.4px">id</div>
<div class="inp" style="left:363.3px;top:347.1px;width:106.3px"><div class="t">ID</div></div>
<div class="cb dis" style="left:487.6px;top:354.3px"></div>
<div class="cb dis" style="left:523.6px;top:354.3px"><svg style="left:1.2px;top:1.5px" width="8.5" height="7" viewBox="0 0 10 8"><path d="M1 4 L3.8 6.6 L9 1.2" stroke="#c2c2c2" stroke-width="1.6" fill="none" stroke-linecap="round" stroke-linejoin="round"/></svg></div>
<div class="cb dis" style="left:559.6px;top:354.3px"></div>
<div class="inp" style="left:590.1px;top:347.1px;width:106.5px;height:26.8px"><div class="t" style="color:#333639;top:5.4px">数字输入</div><svg style="right:8.3px;top:9.9px" width="9" height="5" viewBox="0 0 9 5"><path d="M0.5 0.5 L4.5 4.5 L8.5 0.5" stroke="#c2c2c2" stroke-width="1" fill="none"/></svg></div>
<div class="inp dis" style="left:710.0px;top:347.1px;width:106.5px;height:26.8px"><svg style="right:8.3px;top:9.9px" width="9" height="5" viewBox="0 0 9 5"><path d="M0.5 0.5 L4.5 4.5 L8.5 0.5" stroke="#c2c2c2" stroke-width="1" fill="none"/></svg></div>
<div class="inp dis" style="left:829.1px;top:347.1px;width:106.5px;height:26.8px"><div class="t" style="color:#c2c2c2;top:5.4px">不验证</div><svg style="right:8.3px;top:9.9px" width="9" height="5" viewBox="0 0 9 5"><path d="M0.5 0.5 L4.5 4.5 L8.5 0.5" stroke="#c2c2c2" stroke-width="1" fill="none"/></svg></div>
<div class="inp dis" style="left:949.3px;top:347.1px;width:129.7px;height:26.8px"><div class="t" style="color:#c2c2c2;top:5.4px">占一列位置</div><svg style="right:8.3px;top:9.9px" width="9" height="5" viewBox="0 0 9 5"><path d="M0.5 0.5 L4.5 4.5 L8.5 0.5" stroke="#c2c2c2" stroke-width="1" fill="none"/></svg></div>
<div class="cb" style="left:1098.1px;top:354.3px"></div>
<div class="cb on" style="left:1134.3px;top:354.3px"><svg style="left:1.2px;top:1.5px" width="8.5" height="7" viewBox="0 0 10 8"><path d="M1 4 L3.8 6.6 L9 1.2" stroke="#fff" stroke-width="1.6" fill="none" stroke-linecap="round" stroke-linejoin="round"/></svg></div>
<div class="cb" style="left:1170.4px;top:354.3px"></div>
<div class="inp dis" style="left:1200.4px;top:347.1px;width:94.1px;height:26.8px"><div class="t" style="color:#c2c2c2;top:5.4px">=</div><svg style="right:8.3px;top:9.9px" width="9" height="5" viewBox="0 0 9 5"><path d="M0.5 0.5 L4.5 4.5 L8.5 0.5" stroke="#c2c2c2" stroke-width="1" fill="none"/></svg></div>
<div class="inp" style="left:1308.5px;top:347.1px;width:82.0px;height:26.8px"><div class="t" style="color:#333639;top:5.4px">居左</div><svg style="right:8.3px;top:9.9px" width="9" height="5" viewBox="0 0 9 5"><path d="M0.5 0.5 L4.5 4.5 L8.5 0.5" stroke="#c2c2c2" stroke-width="1" fill="none"/></svg></div>
<div class="inp" style="left:1403.6px;top:347.1px;width:47.2px"><div class="t">100</div></div>
<div class="abs" style="left:200.0px;top:380.9px;width:1px;height:40.4px;background:#f1f1f6"></div>
<div class="abs" style="left:236.5px;top:380.9px;width:1px;height:40.4px;background:#f1f1f6"></div>
<div class="abs" style="left:356.0px;top:380.9px;width:1px;height:40.4px;background:#f1f1f6"></div>
<div class="abs" style="left:475.0px;top:380.9px;width:1px;height:40.4px;background:#f1f1f6"></div>
<div class="abs" style="left:511.0px;top:380.9px;width:1px;height:40.4px;background:#f1f1f6"></div>
<div class="abs" style="left:547.0px;top:380.9px;width:1px;height:40.4px;background:#f1f1f6"></div>
<div class="abs" style="left:583.1px;top:380.9px;width:1px;height:40.4px;background:#f1f1f6"></div>
<div class="abs" style="left:703.0px;top:380.9px;width:1px;height:40.4px;background:#f1f1f6"></div>
<div class="abs" style="left:822.5px;top:380.9px;width:1px;height:40.4px;background:#f1f1f6"></div>
<div class="abs" style="left:942.1px;top:380.9px;width:1px;height:40.4px;background:#f1f1f6"></div>
<div class="abs" style="left:1085.3px;top:380.9px;width:1px;height:40.4px;background:#f1f1f6"></div>
<div class="abs" style="left:1121.7px;top:380.9px;width:1px;height:40.4px;background:#f1f1f6"></div>
<div class="abs" style="left:1157.7px;top:380.9px;width:1px;height:40.4px;background:#f1f1f6"></div>
<div class="abs" style="left:1193.9px;top:380.9px;width:1px;height:40.4px;background:#f1f1f6"></div>
<div class="abs" style="left:1300.8px;top:380.9px;width:1px;height:40.4px;background:#f1f1f6"></div>
<div class="abs" style="left:1396.7px;top:380.9px;width:1px;height:40.4px;background:#f1f1f6"></div>
<div class="abs" style="left:1456.5px;top:380.9px;width:1px;height:40.4px;background:#f1f1f6"></div>
<div class="abs" style="left:200.5px;top:420.8px;width:1256.5px;height:1px;background:#f1f1f6"></div>
<div class="t" style="left:207.7px;top:393.8px">3</div>
<div class="t" style="left:243.6px;top:393.8px">pid</div>
<div class="inp" style="left:363.3px;top:387.5px;width:106.3px"><div class="t">上级</div></div>
<div class="cb" style="left:487.6px;top:394.7px"></div>
<div class="cb" style="left:523.6px;top:394.7px"></div>
<div class="cb" style="left:559.6px;top:394.7px"></div>
<div class="inp" style="left:590.1px;top:387.5px;width:106.5px;height:26.8px"><div class="t" style="color:#333639;top:5.4px">数字输入</div><svg style="right:8.3px;top:9.9px" width="9" height="5" viewBox="0 0 9 5"><path d="M0.5 0.5 L4.5 4.5 L8.5 0.5" stroke="#c2c2c2" stroke-width="1" fill="none"/></svg></div>
<div class="inp" style="left:710.0px;top:387.5px;width:106.5px;height:26.8px"><svg style="right:8.3px;top:9.9px" width="9" height="5" viewBox="0 0 9 5"><path d="M0.5 0.5 L4.5 4.5 L8.5 0.5" stroke="#c2c2c2" stroke-width="1" fill="none"/></svg></div>
<div class="inp" style="left:829.1px;top:387.5px;width:106.5px;height:26.8px"><div class="t" style="color:#333639;top:5.4px">不验证</div><svg style="right:8.3px;top:9.9px" width="9" height="5" viewBox="0 0 9 5"><path d="M0.5 0.5 L4.5 4.5 L8.5 0.5" stroke="#c2c2c2" stroke-width="1" fill="none"/></svg></div>
<div class="inp" style="left:949.3px;top:387.5px;width:129.7px;height:26.8px"><div class="t" style="color:#333639;top:5.4px">占两列位置</div><svg style="right:8.3px;top:9.9px" width="9" height="5" viewBox="0 0 9 5"><path d="M0.5 0.5 L4.5 4.5 L8.5 0.5" stroke="#c2c2c2" stroke-width="1" fill="none"/></svg></div>
<div class="cb" style="left:1098.1px;top:394.7px"></div>
<div class="cb on" style="left:1134.3px;top:394.7px"><svg style="left:1.2px;top:1.5px" width="8.5" height="7" viewBox="0 0 10 8"><path d="M1 4 L3.8 6.6 L9 1.2" stroke="#fff" stroke-width="1.6" fill="none" stroke-linecap="round" stroke-linejoin="round"/></svg></div>
<div class="cb" style="left:1170.4px;top:394.7px"></div>
<div class="inp" style="left:1200.4px;top:387.5px;width:94.1px;height:26.8px"><div class="t" style="color:#333639;top:5.4px">=</div><svg style="right:8.3px;top:9.9px" width="9" height="5" viewBox="0 0 9 5"><path d="M0.5 0.5 L4.5 4.5 L8.5 0.5" stroke="#c2c2c2" stroke-width="1" fill="none"/></svg></div>
<div class="inp" style="left:1308.5px;top:387.5px;width:82.0px;height:26.8px"><div class="t" style="color:#333639;top:5.4px">居左</div><svg style="right:8.3px;top:9.9px" width="9" height="5" viewBox="0 0 9 5"><path d="M0.5 0.5 L4.5 4.5 L8.5 0.5" stroke="#c2c2c2" stroke-width="1" fill="none"/></svg></div>
<div class="inp" style="left:1403.6px;top:387.5px;width:47.2px"><div class="t">100</div></div>
<div class="abs" style="left:201.0px;top:421.9px;width:1255.5px;height:39.5px;background:#f7f7fa"></div>
<div class="abs" style="left:200.0px;top:421.4px;width:1px;height:40.4px;background:#f1f1f6"></div>
<div class="abs" style="left:236.5px;top:421.4px;width:1px;height:40.4px;background:#f1f1f6"></div>
<div class="abs" style="left:356.0px;top:421.4px;width:1px;height:40.4px;background:#f1f1f6"></div>
<div class="abs" style="left:475.0px;top:421.4px;width:1px;height:40.4px;background:#f1f1f6"></div>
<div class="abs" style="left:511.0px;top:421.4px;width:1px;height:40.4px;background:#f1f1f6"></div>
<div class="abs" style="left:547.0px;top:421.4px;width:1px;height:40.4px;background:#f1f1f6"></div>
<div class="abs" style="left:583.1px;top:421.4px;width:1px;height:40.4px;background:#f1f1f6"></div>
<div class="abs" style="left:703.0px;top:421.4px;width:1px;height:40.4px;background:#f1f1f6"></div>
<div class="abs" style="left:822.5px;top:421.4px;width:1px;height:40.4px;background:#f1f1f6"></div>
<div class="abs" style="left:942.1px;top:421.4px;width:1px;height:40.4px;background:#f1f1f6"></div>
<div class="abs" style="left:1085.3px;top:421.4px;width:1px;height:40.4px;background:#f1f1f6"></div>
<div class="abs" style="left:1121.7px;top:421.4px;width:1px;height:40.4px;background:#f1f1f6"></div>
<div class="abs" style="left:1157.7px;top:421.4px;width:1px;height:40.4px;background:#f1f1f6"></div>
<div class="abs" style="left:1193.9px;top:421.4px;width:1px;height:40.4px;background:#f1f1f6"></div>
<div class="abs" style="left:1300.8px;top:421.4px;width:1px;height:40.4px;background:#f1f1f6"></div>
<div class="abs" style="left:1396.7px;top:421.4px;width:1px;height:40.4px;background:#f1f1f6"></div>
<div class="abs" style="left:1456.5px;top:421.4px;width:1px;height:40.4px;background:#f1f1f6"></div>
<div class="abs" style="left:200.5px;top:461.3px;width:1256.5px;height:1px;background:#f1f1f6"></div>
<div class="t" style="left:207.7px;top:434.3px">4</div>
<div class="t" style="left:243.6px;top:434.3px">level</div>
<div class="inp" style="left:363.3px;top:428.0px;width:106.3px"><div class="t">关系树级别</div></div>
<div class="cb dis" style="left:487.6px;top:435.2px"></div>
<div class="cb" style="left:523.6px;top:435.2px"></div>
<div class="cb" style="left:559.6px;top:435.2px"></div>
<div class="inp" style="left:590.1px;top:428.0px;width:106.5px;height:26.8px"><div class="t" style="color:#333639;top:5.4px">数字输入</div><svg style="right:8.3px;top:9.9px" width="9" height="5" viewBox="0 0 9 5"><path d="M0.5 0.5 L4.5 4.5 L8.5 0.5" stroke="#c2c2c2" stroke-width="1" fill="none"/></svg></div>
<div class="inp" style="left:710.0px;top:428.0px;width:106.5px;height:26.8px"><svg style="right:8.3px;top:9.9px" width="9" height="5" viewBox="0 0 9 5"><path d="M0.5 0.5 L4.5 4.5 L8.5 0.5" stroke="#c2c2c2" stroke-width="1" fill="none"/></svg></div>
<div class="inp" style="left:829.1px;top:428.0px;width:106.5px;height:26.8px"><div class="t" style="color:#333639;top:5.4px">不验证</div><svg style="right:8.3px;top:9.9px" width="9" height="5" viewBox="0 0 9 5"><path d="M0.5 0.5 L4.5 4.5 L8.5 0.5" stroke="#c2c2c2" stroke-width="1" fill="none"/></svg></div>
<div class="inp" style="left:949.3px;top:428.0px;width:129.7px;height:26.8px"><div class="t" style="color:#333639;top:5.4px">占一列位置</div><svg style="right:8.3px;top:9.9px" width="9" height="5" viewBox="0 0 9 5"><path d="M0.5 0.5 L4.5 4.5 L8.5 0.5" stroke="#c2c2c2" stroke-width="1" fill="none"/></svg></div>
<div class="cb" style="left:1098.1px;top:435.2px"></div>
<div class="cb" style="left:1134.3px;top:435.2px"></div>
<div class="cb" style="left:1170.4px;top:435.2px"></div>
<div class="inp" style="left:1200.4px;top:428.0px;width:94.1px;height:26.8px"><div class="t" style="color:#333639;top:5.4px">=</div><svg style="right:8.3px;top:9.9px" width="9" height="5" viewBox="0 0 9 5"><path d="M0.5 0.5 L4.5 4.5 L8.5 0.5" stroke="#c2c2c2" stroke-width="1" fill="none"/></svg></div>
<div class="inp" style="left:1308.5px;top:428.0px;width:82.0px;height:26.8px"><div class="t" style="color:#333639;top:5.4px">居左</div><svg style="right:8.3px;top:9.9px" width="9" height="5" viewBox="0 0 9 5"><path d="M0.5 0.5 L4.5 4.5 L8.5 0.5" stroke="#c2c2c2" stroke-width="1" fill="none"/></svg></div>
<div class="inp" style="left:1403.6px;top:428.0px;width:47.2px"><div class="t"></div></div>
<div class="abs" style="left:200.0px;top:461.8px;width:1px;height:40.4px;background:#f1f1f6"></div>
<div class="abs" style="left:236.5px;top:461.8px;width:1px;height:40.4px;background:#f1f1f6"></div>
<div class="abs" style="left:356.0px;top:461.8px;width:1px;height:40.4px;background:#f1f1f6"></div>
<div class="abs" style="left:475.0px;top:461.8px;width:1px;height:40.4px;background:#f1f1f6"></div>
<div class="abs" style="left:511.0px;top:461.8px;width:1px;height:40.4px;background:#f1f1f6"></div>
<div class="abs" style="left:547.0px;top:461.8px;width:1px;height:40.4px;background:#f1f1f6"></div>
<div class="abs" style="left:583.1px;top:461.8px;width:1px;height:40.4px;background:#f1f1f6"></div>
<div class="abs" style="left:703.0px;top:461.8px;width:1px;height:40.4px;background:#f1f1f6"></div>
<div class="abs" style="left:822.5px;top:461.8px;width:1px;height:40.4px;background:#f1f1f6"></div>
<div class="abs" style="left:942.1px;top:461.8px;width:1px;height:40.4px;background:#f1f1f6"></div>
<div class="abs" style="left:1085.3px;top:461.8px;width:1px;height:40.4px;background:#f1f1f6"></div>
<div class="abs" style="left:1121.7px;top:461.8px;width:1px;height:40.4px;background:#f1f1f6"></div>
<div class="abs" style="left:1157.7px;top:461.8px;width:1px;height:40.4px;background:#f1f1f6"></div>
<div class="abs" style="left:1193.9px;top:461.8px;width:1px;height:40.4px;background:#f1f1f6"></div>
<div class="abs" style="left:1300.8px;top:461.8px;width:1px;height:40.4px;background:#f1f1f6"></div>
<div class="abs" style="left:1396.7px;top:461.8px;width:1px;height:40.4px;background:#f1f1f6"></div>
<div class="abs" style="left:1456.5px;top:461.8px;width:1px;height:40.4px;background:#f1f1f6"></div>
<div class="abs" style="left:200.5px;top:501.8px;width:1256.5px;height:1px;background:#f1f1f6"></div>
<div class="t" style="left:207.7px;top:474.7px">5</div>
<div class="t" style="left:243.6px;top:474.7px">tree</div>
<div class="inp" style="left:363.3px;top:468.4px;width:106.3px"><div class="t">关系树</div></div>
<div class="cb dis" style="left:487.6px;top:475.6px"></div>
<div class="cb" style="left:523.6px;top:475.6px"></div>
<div class="cb" style="left:559.6px;top:475.6px"></div>
<div class="inp" style="left:590.1px;top:468.4px;width:106.5px;height:26.8px"><div class="t" style="color:#333639;top:5.4px">富文本</div><svg style="right:8.3px;top:9.9px" width="9" height="5" viewBox="0 0 9 5"><path d="M0.5 0.5 L4.5 4.5 L8.5 0.5" stroke="#c2c2c2" stroke-width="1" fill="none"/></svg></div>
<div class="inp" style="left:710.0px;top:468.4px;width:106.5px;height:26.8px"><svg style="right:8.3px;top:9.9px" width="9" height="5" viewBox="0 0 9 5"><path d="M0.5 0.5 L4.5 4.5 L8.5 0.5" stroke="#c2c2c2" stroke-width="1" fill="none"/></svg></div>
<div class="inp" style="left:829.1px;top:468.4px;width:106.5px;height:26.8px"><div class="t" style="color:#333639;top:5.4px">不验证</div><svg style="right:8.3px;top:9.9px" width="9" height="5" viewBox="0 0 9 5"><path d="M0.5 0.5 L4.5 4.5 L8.5 0.5" stroke="#c2c2c2" stroke-width="1" fill="none"/></svg></div>
<div class="inp" style="left:949.3px;top:468.4px;width:129.7px;height:26.8px"><div class="t" style="color:#333639;top:5.4px">占一列位置</div><svg style="right:8.3px;top:9.9px" width="9" height="5" viewBox="0 0 9 5"><path d="M0.5 0.5 L4.5 4.5 L8.5 0.5" stroke="#c2c2c2" stroke-width="1" fill="none"/></svg></div>
<div class="cb" style="left:1098.1px;top:475.6px"></div>
<div class="cb" style="left:1134.3px;top:475.6px"></div>
<div class="cb" style="left:1170.4px;top:475.6px"></div>
<div class="inp" style="left:1200.4px;top:468.4px;width:94.1px;height:26.8px"><div class="t" style="color:#333639;top:5.4px">LIKE %...%</div><svg style="right:8.3px;top:9.9px" width="9" height="5" viewBox="0 0 9 5"><path d="M0.5 0.5 L4.5 4.5 L8.5 0.5" stroke="#c2c2c2" stroke-width="1" fill="none"/></svg></div>
<div class="inp" style="left:1308.5px;top:468.4px;width:82.0px;height:26.8px"><div class="t" style="color:#333639;top:5.4px">居左</div><svg style="right:8.3px;top:9.9px" width="9" height="5" viewBox="0 0 9 5"><path d="M0.5 0.5 L4.5 4.5 L8.5 0.5" stroke="#c2c2c2" stroke-width="1" fill="none"/></svg></div>
<div class="inp" style="left:1403.6px;top:468.4px;width:47.2px"><div class="t"></div></div>
<div class="abs" style="left:200.0px;top:502.2px;width:1px;height:40.5px;background:#f1f1f6"></div>
<div class="abs" style="left:236.5px;top:502.2px;width:1px;height:40.5px;background:#f1f1f6"></div>
<div class="abs" style="left:356.0px;top:502.2px;width:1px;height:40.5px;background:#f1f1f6"></div>
<div class="abs" style="left:475.0px;top:502.2px;width:1px;height:40.5px;background:#f1f1f6"></div>
<div class="abs" style="left:511.0px;top:502.2px;width:1px;height:40.5px;background:#f1f1f6"></div>
<div class="abs" style="left:547.0px;top:502.2px;width:1px;height:40.5px;background:#f1f1f6"></div>
<div class="abs" style="left:583.1px;top:502.2px;width:1px;height:40.5px;background:#f1f1f6"></div>
<div class="abs" style="left:703.0px;top:502.2px;width:1px;height:40.5px;background:#f1f1f6"></div>
<div class="abs" style="left:822.5px;top:502.2px;width:1px;height:40.5px;background:#f1f1f6"></div>
<div class="abs" style="left:942.1px;top:502.2px;width:1px;height:40.5px;background:#f1f1f6"></div>
<div class="abs" style="left:1085.3px;top:502.2px;width:1px;height:40.5px;background:#f1f1f6"></div>
<div class="abs" style="left:1121.7px;top:502.2px;width:1px;height:40.5px;background:#f1f1f6"></div>
<div class="abs" style="left:1157.7px;top:502.2px;width:1px;height:40.5px;background:#f1f1f6"></div>
<div class="abs" style="left:1193.9px;top:502.2px;width:1px;height:40.5px;background:#f1f1f6"></div>
<div class="abs" style="left:1300.8px;top:502.2px;width:1px;height:40.5px;background:#f1f1f6"></div>
<div class="abs" style="left:1396.7px;top:502.2px;width:1px;height:40.5px;background:#f1f1f6"></div>
<div class="abs" style="left:1456.5px;top:502.2px;width:1px;height:40.5px;background:#f1f1f6"></div>
<div class="abs" style="left:200.5px;top:542.2px;width:1256.5px;height:1px;background:#f1f1f6"></div>
<div class="t" style="left:207.7px;top:515.2px">6</div>
<div class="t" style="left:243.6px;top:515.2px">category_id</div>
<div class="inp" style="left:363.3px;top:508.9px;width:106.3px"><div class="t">测试分类</div></div>
<div class="cb on" style="left:487.6px;top:516.1px"><svg style="left:1.2px;top:1.5px" width="8.5" height="7" viewBox="0 0 10 8"><path d="M1 4 L3.8 6.6 L9 1.2" stroke="#fff" stroke-width="1.6" fill="none" stroke-linecap="round" stroke-linejoin="round"/></svg></div>
<div class="cb" style="left:523.6px;top:516.1px"></div>
<div class="cb" style="left:559.6px;top:516.1px"></div>
<div class="inp" style="left:590.1px;top:508.9px;width:106.5px;height:26.8px"><div class="t" style="color:#333639;top:5.4px">单选下拉框</div><svg style="right:8.3px;top:9.9px" width="9" height="5" viewBox="0 0 9 5"><path d="M0.5 0.5 L4.5 4.5 L8.5 0.5" stroke="#c2c2c2" stroke-width="1" fill="none"/></svg></div>
<div class="inp" style="left:710.0px;top:508.9px;width:106.5px;height:26.8px"><div class="t" style="color:#333639;top:5.4px">测试分类选项</div><svg style="right:8.3px;top:9.9px" width="9" height="5" viewBox="0 0 9 5"><path d="M0.5 0.5 L4.5 4.5 L8.5 0.5" stroke="#c2c2c2" stroke-width="1" fill="none"/></svg></div>
<div class="inp" style="left:829.1px;top:508.9px;width:106.5px;height:26.8px"><div class="t" style="color:#333639;top:5.4px">不验证</div><svg style="right:8.3px;top:9.9px" width="9" height="5" viewBox="0 0 9 5"><path d="M0.5 0.5 L4.5 4.5 L8.5 0.5" stroke="#c2c2c2" stroke-width="1" fill="none"/></svg></div>
<div class="inp" style="left:949.3px;top:508.9px;width:129.7px;height:26.8px"><div class="t" style="color:#333639;top:5.4px">占两列位置</div><svg style="right:8.3px;top:9.9px" width="9" height="5" viewBox="0 0 9 5"><path d="M0.5 0.5 L4.5 4.5 L8.5 0.5" stroke="#c2c2c2" stroke-width="1" fill="none"/></svg></div>
<div class="cb on" style="left:1098.1px;top:516.1px"><svg style="left:1.2px;top:1.5px" width="8.5" height="7" viewBox="0 0 10 8"><path d="M1 4 L3.8 6.6 L9 1.2" stroke="#fff" stroke-width="1.6" fill="none" stroke-linecap="round" stroke-linejoin="round"/></svg></div>
<div class="cb on" style="left:1134.3px;top:516.1px"><svg style="left:1.2px;top:1.5px" width="8.5" height="7" viewBox="0 0 10 8"><path d="M1 4 L3.8 6.6 L9 1.2" stroke="#fff" stroke-width="1.6" fill="none" stroke-linecap="round" stroke-linejoin="round"/></svg></div>
<div class="cb on" style="left:1170.4px;top:516.1px"><svg style="left:1.2px;top:1.5px" width="8.5" height="7" viewBox="0 0 10 8"><path d="M1 4 L3.8 6.6 L9 1.2" stroke="#fff" stroke-width="1.6" fill="none" stroke-linecap="round" stroke-linejoin="round"/></svg></div>
<div class="inp" style="left:1200.4px;top:508.9px;width:94.1px;height:26.8px"><div class="t" style="color:#333639;top:5.4px">=</div><svg style="right:8.3px;top:9.9px" width="9" height="5" viewBox="0 0 9 5"><path d="M0.5 0.5 L4.5 4.5 L8.5 0.5" stroke="#c2c2c2" stroke-width="1" fill="none"/></svg></div>
<div class="inp" style="left:1308.5px;top:508.9px;width:82.0px;height:26.8px"><div class="t" style="color:#333639;top:5.4px">居左</div><svg style="right:8.3px;top:9.9px" width="9" height="5" viewBox="0 0 9 5"><path d="M0.5 0.5 L4.5 4.5 L8.5 0.5" stroke="#c2c2c2" stroke-width="1" fill="none"/></svg></div>
<div class="inp" style="left:1403.6px;top:508.9px;width:47.2px"><div class="t">100</div></div>
<div class="abs" style="left:200.0px;top:542.7px;width:1px;height:40.5px;background:#f1f1f6"></div>
<div class="abs" style="left:236.5px;top:542.7px;width:1px;height:40.5px;background:#f1f1f6"></div>
<div class="abs" style="left:356.0px;top:542.7px;width:1px;height:40.5px;background:#f1f1f6"></div>
<div class="abs" style="left:475.0px;top:542.7px;width:1px;height:40.5px;background:#f1f1f6"></div>
<div class="abs" style="left:511.0px;top:542.7px;width:1px;height:40.5px;background:#f1f1f6"></div>
<div class="abs" style="left:547.0px;top:542.7px;width:1px;height:40.5px;background:#f1f1f6"></div>
<div class="abs" style="left:583.1px;top:542.7px;width:1px;height:40.5px;background:#f1f1f6"></div>
<div class="abs" style="left:703.0px;top:542.7px;width:1px;height:40.5px;background:#f1f1f6"></div>
<div class="abs" style="left:822.5px;top:542.7px;width:1px;height:40.5px;background:#f1f1f6"></div>
<div class="abs" style="left:942.1px;top:542.7px;width:1px;height:40.5px;background:#f1f1f6"></div>
<div class="abs" style="left:1085.3px;top:542.7px;width:1px;height:40.5px;background:#f1f1f6"></div>
<div class="abs" style="left:1121.7px;top:542.7px;width:1px;height:40.5px;background:#f1f1f6"></div>
<div class="abs" style="left:1157.7px;top:542.7px;width:1px;height:40.5px;background:#f1f1f6"></div>
<div class="abs" style="left:1193.9px;top:542.7px;width:1px;height:40.5px;background:#f1f1f6"></div>
<div class="abs" style="left:1300.8px;top:542.7px;width:1px;height:40.5px;background:#f1f1f6"></div>
<div class="abs" style="left:1396.7px;top:542.7px;width:1px;height:40.5px;background:#f1f1f6"></div>
<div class="abs" style="left:1456.5px;top:542.7px;width:1px;height:40.5px;background:#f1f1f6"></div>
<div class="abs" style="left:200.5px;top:582.7px;width:1256.5px;height:1px;background:#f1f1f6"></div>
<div class="t" style="left:207.7px;top:555.6px">7</div>
<div class="t" style="left:243.6px;top:555.6px">description</div>
<div class="inp" style="left:363.3px;top:549.3px;width:106.3px"><div class="t">描述</div></div>
<div class="cb on" style="left:487.6px;top:556.5px"><svg style="left:1.2px;top:1.5px" width="8.5" height="7" viewBox="0 0 10 8"><path d="M1 4 L3.8 6.6 L9 1.2" stroke="#fff" stroke-width="1.6" fill="none" stroke-linecap="round" stroke-linejoin="round"/></svg></div>
<div class="cb" style="left:523.6px;top:556.5px"></div>
<div class="cb" style="left:559.6px;top:556.5px"></div>
<div class="inp" style="left:590.1px;top:549.3px;width:106.5px;height:26.8px"><div class="t" style="color:#333639;top:5.4px">文本域</div><svg style="right:8.3px;top:9.9px" width="9" height="5" viewBox="0 0 9 5"><path d="M0.5 0.5 L4.5 4.5 L8.5 0.5" stroke="#c2c2c2" stroke-width="1" fill="none"/></svg></div>
<div class="inp" style="left:710.0px;top:549.3px;width:106.5px;height:26.8px"><svg style="right:8.3px;top:9.9px" width="9" height="5" viewBox="0 0 9 5"><path d="M0.5 0.5 L4.5 4.5 L8.5 0.5" stroke="#c2c2c2" stroke-width="1" fill="none"/></svg></div>
<div class="inp" style="left:829.1px;top:549.3px;width:106.5px;height:26.8px"><div class="t" style="color:#333639;top:5.4px">不验证</div><svg style="right:8.3px;top:9.9px" width="9" height="5" viewBox="0 0 9 5"><path d="M0.5 0.5 L4.5 4.5 L8.5 0.5" stroke="#c2c2c2" stroke-width="1" fill="none"/></svg></div>
<div class="inp" style="left:949.3px;top:549.3px;width:129.7px;height:26.8px"><div class="t" style="color:#333639;top:5.4px">占两列位置</div><svg style="right:8.3px;top:9.9px" width="9" height="5" viewBox="0 0 9 5"><path d="M0.5 0.5 L4.5 4.5 L8.5 0.5" stroke="#c2c2c2" stroke-width="1" fill="none"/></svg></div>
<div class="cb" style="left:1098.1px;top:556.5px"></div>
<div class="cb on" style="left:1134.3px;top:556.5px"><svg style="left:1.2px;top:1.5px" width="8.5" height="7" viewBox="0 0 10 8"><path d="M1 4 L3.8 6.6 L9 1.2" stroke="#fff" stroke-width="1.6" fill="none" stroke-linecap="round" stroke-linejoin="round"/></svg></div>
<div class="cb" style="left:1170.4px;top:556.5px"></div>
<div class="inp" style="left:1200.4px;top:549.3px;width:94.1px;height:26.8px"><div class="t" style="color:#333639;top:5.4px">LIKE</div><svg style="right:8.3px;top:9.9px" width="9" height="5" viewBox="0 0 9 5"><path d="M0.5 0.5 L4.5 4.5 L8.5 0.5" stroke="#c2c2c2" stroke-width="1" fill="none"/></svg></div>
<div class="inp" style="left:1308.5px;top:549.3px;width:82.0px;height:26.8px"><div class="t" style="color:#333639;top:5.4px">居左</div><svg style="right:8.3px;top:9.9px" width="9" height="5" viewBox="0 0 9 5"><path d="M0.5 0.5 L4.5 4.5 L8.5 0.5" stroke="#c2c2c2" stroke-width="1" fill="none"/></svg></div>
<div class="inp" style="left:1403.6px;top:549.3px;width:47.2px"><div class="t">300</div></div>
<div class="abs" style="left:200.0px;top:583.2px;width:1px;height:40.5px;background:#f1f1f6"></div>
<div class="abs" style="left:236.5px;top:583.2px;width:1px;height:40.5px;background:#f1f1f6"></div>
<div class="abs" style="left:356.0px;top:583.2px;width:1px;height:40.5px;background:#f1f1f6"></div>
<div class="abs" style="left:475.0px;top:583.2px;width:1px;height:40.5px;background:#f1f1f6"></div>
<div class="abs" style="left:511.0px;top:583.2px;width:1px;height:40.5px;background:#f1f1f6"></div>
<div class="abs" style="left:547.0px;top:583.2px;width:1px;height:40.5px;background:#f1f1f6"></div>
<div class="abs" style="left:583.1px;top:583.2px;width:1px;height:40.5px;background:#f1f1f6"></div>
<div class="abs" style="left:703.0px;top:583.2px;width:1px;height:40.5px;background:#f1f1f6"></div>
<div class="abs" style="left:822.5px;top:583.2px;width:1px;height:40.5px;background:#f1f1f6"></div>
<div class="abs" style="left:942.1px;top:583.2px;width:1px;height:40.5px;background:#f1f1f6"></div>
<div class="abs" style="left:1085.3px;top:583.2px;width:1px;height:40.5px;background:#f1f1f6"></div>
<div class="abs" style="left:1121.7px;top:583.2px;width:1px;height:40.5px;background:#f1f1f6"></div>
<div class="abs" style="left:1157.7px;top:583.2px;width:1px;height:40.5px;background:#f1f1f6"></div>
<div class="abs" style="left:1193.9px;top:583.2px;width:1px;height:40.5px;background:#f1f1f6"></div>
<div class="abs" style="left:1300.8px;top:583.2px;width:1px;height:40.5px;background:#f1f1f6"></div>
<div class="abs" style="left:1396.7px;top:583.2px;width:1px;height:40.5px;background:#f1f1f6"></div>
<div class="abs" style="left:1456.5px;top:583.2px;width:1px;height:40.5px;background:#f1f1f6"></div>
<div class="abs" style="left:200.5px;top:623.1px;width:1256.5px;height:1px;background:#f1f1f6"></div>
<div class="t" style="left:207.7px;top:596.1px">8</div>
<div class="t" style="left:243.6px;top:596.1px">sort</div>
<div class="inp" style="left:363.3px;top:589.8px;width:106.3px"><div class="t">排序</div></div>
<div class="cb on" style="left:487.6px;top:597.0px"><svg style="left:1.2px;top:1.5px" width="8.5" height="7" viewBox="0 0 10 8"><path d="M1 4 L3.8 6.6 L9 1.2" stroke="#fff" stroke-width="1.6" fill="none" stroke-linecap="round" stroke-linejoin="round"/></svg></div>
<div class="cb" style="left:523.6px;top:597.0px"></div>
<div class="cb" style="left:559.6px;top:597.0px"></div>
<div class="inp" style="left:590.1px;top:589.8px;width:106.5px;height:26.8px"><div class="t" style="color:#333639;top:5.4px">数字输入</div><svg style="right:8.3px;top:9.9px" width="9" height="5" viewBox="0 0 9 5"><path d="M0.5 0.5 L4.5 4.5 L8.5 0.5" stroke="#c2c2c2" stroke-width="1" fill="none"/></svg></div>
<div class="inp" style="left:710.0px;top:589.8px;width:106.5px;height:26.8px"><svg style="right:8.3px;top:9.9px" width="9" height="5" viewBox="0 0 9 5"><path d="M0.5 0.5 L4.5 4.5 L8.5 0.5" stroke="#c2c2c2" stroke-width="1" fill="none"/></svg></div>
<div class="inp" style="left:829.1px;top:589.8px;width:106.5px;height:26.8px"><div class="t" style="color:#333639;top:5.4px">不验证</div><svg style="right:8.3px;top:9.9px" width="9" height="5" viewBox="0 0 9 5"><path d="M0.5 0.5 L4.5 4.5 L8.5 0.5" stroke="#c2c2c2" stroke-width="1" fill="none"/></svg></div>
<div class="inp" style="left:949.3px;top:589.8px;width:129.7px;height:26.8px"><div class="t" style="color:#333639;top:5.4px">占一列位置</div><svg style="right:8.3px;top:9.9px" width="9" height="5" viewBox="0 0 9 5"><path d="M0.5 0.5 L4.5 4.5 L8.5 0.5" stroke="#c2c2c2" stroke-width="1" fill="none"/></svg></div>
<div class="cb" style="left:1098.1px;top:597.0px"></div>
<div class="cb on" style="left:1134.3px;top:597.0px"><svg style="left:1.2px;top:1.5px" width="8.5" height="7" viewBox="0 0 10 8"><path d="M1 4 L3.8 6.6 L9 1.2" stroke="#fff" stroke-width="1.6" fill="none" stroke-linecap="round" stroke-linejoin="round"/></svg></div>
<div class="cb" style="left:1170.4px;top:597.0px"></div>
<div class="inp" style="left:1200.4px;top:589.8px;width:94.1px;height:26.8px"><div class="t" style="color:#333639;top:5.4px">=</div><svg style="right:8.3px;top:9.9px" width="9" height="5" viewBox="0 0 9 5"><path d="M0.5 0.5 L4.5 4.5 L8.5 0.5" stroke="#c2c2c2" stroke-width="1" fill="none"/></svg></div>
<div class="inp" style="left:1308.5px;top:589.8px;width:82.0px;height:26.8px"><div class="t" style="color:#333639;top:5.4px">居左</div><svg style="right:8.3px;top:9.9px" width="9" height="5" viewBox="0 0 9 5"><path d="M0.5 0.5 L4.5 4.5 L8.5 0.5" stroke="#c2c2c2" stroke-width="1" fill="none"/></svg></div>
<div class="inp" style="left:1403.6px;top:589.8px;width:47.2px"><div class="t">100</div></div>
<div class="abs" style="left:200.0px;top:623.6px;width:1px;height:40.5px;background:#f1f1f6"></div>
<div class="abs" style="left:236.5px;top:623.6px;width:1px;height:40.5px;background:#f1f1f6"></div>
<div class="abs" style="left:356.0px;top:623.6px;width:1px;height:40.5px;background:#f1f1f6"></div>
<div class="abs" style="left:475.0px;top:623.6px;width:1px;height:40.5px;background:#f1f1f6"></div>
<div class="abs" style="left:511.0px;top:623.6px;width:1px;height:40.5px;background:#f1f1f6"></div>
<div class="abs" style="left:547.0px;top:623.6px;width:1px;height:40.5px;background:#f1f1f6"></div>
<div class="abs" style="left:583.1px;top:623.6px;width:1px;height:40.5px;background:#f1f1f6"></div>
<div class="abs" style="left:703.0px;top:623.6px;width:1px;height:40.5px;background:#f1f1f6"></div>
<div class="abs" style="left:822.5px;top:623.6px;width:1px;height:40.5px;background:#f1f1f6"></div>
<div class="abs" style="left:942.1px;top:623.6px;width:1px;height:40.5px;background:#f1f1f6"></div>
<div class="abs" style="left:1085.3px;top:623.6px;width:1px;height:40.5px;background:#f1f1f6"></div>
<div class="abs" style="left:1121.7px;top:623.6px;width:1px;height:40.5px;background:#f1f1f6"></div>
<div class="abs" style="left:1157.7px;top:623.6px;width:1px;height:40.5px;background:#f1f1f6"></div>
<div class="abs" style="left:1193.9px;top:623.6px;width:1px;height:40.5px;background:#f1f1f6"></div>
<div class="abs" style="left:1300.8px;top:623.6px;width:1px;height:40.5px;background:#f1f1f6"></div>
<div class="abs" style="left:1396.7px;top:623.6px;width:1px;height:40.5px;background:#f1f1f6"></div>
<div class="abs" style="left:1456.5px;top:623.6px;width:1px;height:40.5px;background:#f1f1f6"></div>
<div class="abs" style="left:200.5px;top:663.6px;width:1256.5px;height:1px;background:#f1f1f6"></div>
<div class="t" style="left:207.7px;top:636.5px">9</div>
<div class="t" style="left:243.6px;top:636.5px">status</div>
<div class="inp" style="left:363.3px;top:630.2px;width:106.3px"><div class="t">状态</div></div>
<div class="cb on" style="left:487.6px;top:637.4px"><svg style="left:1.2px;top:1.5px" width="8.5" height="7" viewBox="0 0 10 8"><path d="M1 4 L3.8 6.6 L9 1.2" stroke="#fff" stroke-width="1.6" fill="none" stroke-linecap="round" stroke-linejoin="round"/></svg></div>
<div class="cb" style="left:523.6px;top:637.4px"></div>
<div class="cb" style="left:559.6px;top:637.4px"></div>
<div class="inp" style="left:590.1px;top:630.2px;width:106.5px;height:26.8px"><div class="t" style="color:#333639;top:5.4px">单选下拉框</div><svg style="right:8.3px;top:9.9px" width="9" height="5" viewBox="0 0 9 5"><path d="M0.5 0.5 L4.5 4.5 L8.5 0.5" stroke="#c2c2c2" stroke-width="1" fill="none"/></svg></div>
<div class="inp" style="left:710.0px;top:630.2px;width:106.5px;height:26.8px"><div class="t" style="color:#333639;top:5.4px">系统状态</div><svg style="right:8.3px;top:9.9px" width="9" height="5" viewBox="0 0 9 5"><path d="M0.5 0.5 L4.5 4.5 L8.5 0.5" stroke="#c2c2c2" stroke-width="1" fill="none"/></svg></div>
<div class="inp" style="left:829.1px;top:630.2px;width:106.5px;height:26.8px"><div class="t" style="color:#333639;top:5.4px">不验证</div><svg style="right:8.3px;top:9.9px" width="9" height="5" viewBox="0 0 9 5"><path d="M0.5 0.5 L4.5 4.5 L8.5 0.5" stroke="#c2c2c2" stroke-width="1" fill="none"/></svg></div>
<div class="inp" style="left:949.3px;top:630.2px;width:129.7px;height:26.8px"><div class="t" style="color:#333639;top:5.4px">占一列位置</div><svg style="right:8.3px;top:9.9px" width="9" height="5" viewBox="0 0 9 5"><path d="M0.5 0.5 L4.5 4.5 L8.5 0.5" stroke="#c2c2c2" stroke-width="1" fill="none"/></svg></div>
<div class="cb on" style="left:1098.1px;top:637.4px"><svg style="left:1.2px;top:1.5px" width="8.5" height="7" viewBox="0 0 10 8"><path d="M1 4 L3.8 6.6 L9 1.2" stroke="#fff" stroke-width="1.6" fill="none" stroke-linecap="round" stroke-linejoin="round"/></svg></div>
<div class="cb on" style="left:1134.3px;top:637.4px"><svg style="left:1.2px;top:1.5px" width="8.5" height="7" viewBox="0 0 10 8"><path d="M1 4 L3.8 6.6 L9 1.2" stroke="#fff" stroke-width="1.6" fill="none" stroke-linecap="round" stroke-linejoin="round"/></svg></div>
<div class="cb on" style="left:1170.4px;top:637.4px"><svg style="left:1.2px;top:1.5px" width="8.5" height="7" viewBox="0 0 10 8"><path d="M1 4 L3.8 6.6 L9 1.2" stroke="#fff" stroke-width="1.6" fill="none" stroke-linecap="round" stroke-linejoin="round"/></svg></div>
<div class="inp" style="left:1200.4px;top:630.2px;width:94.1px;height:26.8px"><div class="t" style="color:#333639;top:5.4px">=</div><svg style="right:8.3px;top:9.9px" width="9" height="5" viewBox="0 0 9 5"><path d="M0.5 0.5 L4.5 4.5 L8.5 0.5" stroke="#c2c2c2" stroke-width="1" fill="none"/></svg></div>
<div class="inp" style="left:1308.5px;top:630.2px;width:82.0px;height:26.8px"><div class="t" style="color:#333639;top:5.4px">居左</div><svg style="right:8.3px;top:9.9px" width="9" height="5" viewBox="0 0 9 5"><path d="M0.5 0.5 L4.5 4.5 L8.5 0.5" stroke="#c2c2c2" stroke-width="1" fill="none"/></svg></div>
<div class="inp" style="left:1403.6px;top:630.2px;width:47.2px"><div class="t">150</div></div>
<div class="abs" style="left:200.0px;top:664.0px;width:1px;height:40.5px;background:#f1f1f6"></div>
<div class="abs" style="left:236.5px;top:664.0px;width:1px;height:40.5px;background:#f1f1f6"></div>
<div class="abs" style="left:356.0px;top:664.0px;width:1px;height:40.5px;background:#f1f1f6"></div>
<div class="abs" style="left:475.0px;top:664.0px;width:1px;height:40.5px;background:#f1f1f6"></div>
<div class="abs" style="left:511.0px;top:664.0px;width:1px;height:40.5px;background:#f1f1f6"></div>
<div class="abs" style="left:547.0px;top:664.0px;width:1px;height:40.5px;background:#f1f1f6"></div>
<div class="abs" style="left:583.1px;top:664.0px;width:1px;height:40.5px;background:#f1f1f6"></div>
<div class="abs" style="left:703.0px;top:664.0px;width:1px;height:40.5px;background:#f1f1f6"></div>
<div class="abs" style="left:822.5px;top:664.0px;width:1px;height:40.5px;background:#f1f1f6"></div>
<div class="abs" style="left:942.1px;top:664.0px;width:1px;height:40.5px;background:#f1f1f6"></div>
<div class="abs" style="left:1085.3px;top:664.0px;width:1px;height:40.5px;background:#f1f1f6"></div>
<div class="abs" style="left:1121.7px;top:664.0px;width:1px;height:40.5px;background:#f1f1f6"></div>
<div class="abs" style="left:1157.7px;top:664.0px;width:1px;height:40.5px;background:#f1f1f6"></div>
<div class="abs" style="left:1193.9px;top:664.0px;width:1px;height:40.5px;background:#f1f1f6"></div>
<div class="abs" style="left:1300.8px;top:664.0px;width:1px;height:40.5px;background:#f1f1f6"></div>
<div class="abs" style="left:1396.7px;top:664.0px;width:1px;height:40.5px;background:#f1f1f6"></div>
<div class="abs" style="left:1456.5px;top:664.0px;width:1px;height:40.5px;background:#f1f1f6"></div>
<div class="abs" style="left:200.5px;top:704.0px;width:1256.5px;height:1px;background:#f1f1f6"></div>
<div class="t" style="left:207.7px;top:677.0px">10</div>
<div class="t" style="left:243.6px;top:677.0px">created_by</div>
<div class="inp" style="left:363.3px;top:670.6px;width:106.3px"><div class="t">创建者</div></div>
<div class="cb dis" style="left:487.6px;top:677.9px"></div>
<div class="cb" style="left:523.6px;top:677.9px"></div>
<div class="cb" style="left:559.6px;top:677.9px"></div>
<div class="inp" style="left:590.1px;top:670.6px;width:106.5px;height:26.8px"><div class="t" style="color:#333639;top:5.4px">数字输入</div><svg style="right:8.3px;top:9.9px" width="9" height="5" viewBox="0 0 9 5"><path d="M0.5 0.5 L4.5 4.5 L8.5 0.5" stroke="#c2c2c2" stroke-width="1" fill="none"/></svg></div>
<div class="inp" style="left:710.0px;top:670.6px;width:106.5px;height:26.8px"><svg style="right:8.3px;top:9.9px" width="9" height="5" viewBox="0 0 9 5"><path d="M0.5 0.5 L4.5 4.5 L8.5 0.5" stroke="#c2c2c2" stroke-width="1" fill="none"/></svg></div>
<div class="inp" style="left:829.1px;top:670.6px;width:106.5px;height:26.8px"><div class="t" style="color:#333639;top:5.4px">不验证</div><svg style="right:8.3px;top:9.9px" width="9" height="5" viewBox="0 0 9 5"><path d="M0.5 0.5 L4.5 4.5 L8.5 0.5" stroke="#c2c2c2" stroke-width="1" fill="none"/></svg></div>
<div class="inp" style="left:949.3px;top:670.6px;width:129.7px;height:26.8px"><div class="t" style="color:#333639;top:5.4px">占一列位置</div><svg style="right:8.3px;top:9.9px" width="9" height="5" viewBox="0 0 9 5"><path d="M0.5 0.5 L4.5 4.5 L8.5 0.5" stroke="#c2c2c2" stroke-width="1" fill="none"/></svg></div>
<div class="cb on" style="left:1098.1px;top:677.9px"><svg style="left:1.2px;top:1.5px" width="8.5" height="7" viewBox="0 0 10 8"><path d="M1 4 L3.8 6.6 L9 1.2" stroke="#fff" stroke-width="1.6" fill="none" stroke-linecap="round" stroke-linejoin="round"/></svg></div>
<div class="cb on" style="left:1134.3px;top:677.9px"><svg style="left:1.2px;top:1.5px" width="8.5" height="7" viewBox="0 0 10 8"><path d="M1 4 L3.8 6.6 L9 1.2" stroke="#fff" stroke-width="1.6" fill="none" stroke-linecap="round" stroke-linejoin="round"/></svg></div>
<div class="cb" style="left:1170.4px;top:677.9px"></div>
<div class="inp" style="left:1200.4px;top:670.6px;width:94.1px;height:26.8px"><div class="t" style="color:#333639;top:5.4px">=</div><svg style="right:8.3px;top:9.9px" width="9" height="5" viewBox="0 0 9 5"><path d="M0.5 0.5 L4.5 4.5 L8.5 0.5" stroke="#c2c2c2" stroke-width="1" fill="none"/></svg></div>
<div class="inp" style="left:1308.5px;top:670.6px;width:82.0px;height:26.8px"><div class="t" style="color:#333639;top:5.4px">居左</div><svg style="right:8.3px;top:9.9px" width="9" height="5" viewBox="0 0 9 5"><path d="M0.5 0.5 L4.5 4.5 L8.5 0.5" stroke="#c2c2c2" stroke-width="1" fill="none"/></svg></div>
<div class="inp" style="left:1403.6px;top:670.6px;width:47.2px"><div class="t">100</div></div>
<div class="abs" style="left:200.0px;top:704.5px;width:1px;height:40.5px;background:#f1f1f6"></div>
<div class="abs" style="left:236.5px;top:704.5px;width:1px;height:40.5px;background:#f1f1f6"></div>
<div class="abs" style="left:356.0px;top:704.5px;width:1px;height:40.5px;background:#f1f1f6"></div>
<div class="abs" style="left:475.0px;top:704.5px;width:1px;height:40.5px;background:#f1f1f6"></div>
<div class="abs" style="left:511.0px;top:704.5px;width:1px;height:40.5px;background:#f1f1f6"></div>
<div class="abs" style="left:547.0px;top:704.5px;width:1px;height:40.5px;background:#f1f1f6"></div>
<div class="abs" style="left:583.1px;top:704.5px;width:1px;height:40.5px;background:#f1f1f6"></div>
<div class="abs" style="left:703.0px;top:704.5px;width:1px;height:40.5px;background:#f1f1f6"></div>
<div class="abs" style="left:822.5px;top:704.5px;width:1px;height:40.5px;background:#f1f1f6"></div>
<div class="abs" style="left:942.1px;top:704.5px;width:1px;height:40.5px;background:#f1f1f6"></div>
<div class="abs" style="left:1085.3px;top:704.5px;width:1px;height:40.5px;background:#f1f1f6"></div>
<div class="abs" style="left:1121.7px;top:704.5px;width:1px;height:40.5px;background:#f1f1f6"></div>
<div class="abs" style="left:1157.7px;top:704.5px;width:1px;height:40.5px;background:#f1f1f6"></div>
<div class="abs" style="left:1193.9px;top:704.5px;width:1px;height:40.5px;background:#f1f1f6"></div>
<div class="abs" style="left:1300.8px;top:704.5px;width:1px;height:40.5px;background:#f1f1f6"></div>
<div class="abs" style="left:1396.7px;top:704.5px;width:1px;height:40.5px;background:#f1f1f6"></div>
<div class="abs" style="left:1456.5px;top:704.5px;width:1px;height:40.5px;background:#f1f1f6"></div>
<div class="abs" style="left:200.5px;top:744.5px;width:1256.5px;height:1px;background:#f1f1f6"></div>
<div class="t" style="left:207.7px;top:717.4px">11</div>
<div class="t" style="left:243.6px;top:717.4px">updated_by</div>
<div class="inp" style="left:363.3px;top:711.1px;width:106.3px"><div class="t">更新者</div></div>
<div class="cb dis" style="left:487.6px;top:718.3px"></div>
<div class="cb" style="left:523.6px;top:718.3px"></div>
<div class="cb" style="left:559.6px;top:718.3px"></div>
<div class="inp" style="left:590.1px;top:711.1px;width:106.5px;height:26.8px"><div class="t" style="color:#333639;top:5.4px">数字输入</div><svg style="right:8.3px;top:9.9px" width="9" height="5" viewBox="0 0 9 5"><path d="M0.5 0.5 L4.5 4.5 L8.5 0.5" stroke="#c2c2c2" stroke-width="1" fill="none"/></svg></div>
<div class="inp" style="left:710.0px;top:711.1px;width:106.5px;height:26.8px"><svg style="right:8.3px;top:9.9px" width="9" height="5" viewBox="0 0 9 5"><path d="M0.5 0.5 L4.5 4.5 L8.5 0.5" stroke="#c2c2c2" stroke-width="1" fill="none"/></svg></div>
<div class="inp" style="left:829.1px;top:711.1px;width:106.5px;height:26.8px"><div class="t" style="color:#333639;top:5.4px">不验证</div><svg style="right:8.3px;top:9.9px" width="9" height="5" viewBox="0 0 9 5"><path d="M0.5 0.5 L4.5 4.5 L8.5 0.5" stroke="#c2c2c2" stroke-width="1" fill="none"/></svg></div>
<div class="inp" style="left:949.3px;top:711.1px;width:129.7px;height:26.8px"><div class="t" style="color:#333639;top:5.4px">占一列位置</div><svg style="right:8.3px;top:9.9px" width="9" height="5" viewBox="0 0 9 5"><path d="M0.5 0.5 L4.5 4.5 L8.5 0.5" stroke="#c2c2c2" stroke-width="1" fill="none"/></svg></div>
<div class="cb" style="left:1098.1px;top:718.3px"></div>
<div class="cb on" style="left:1134.3px;top:718.3px"><svg style="left:1.2px;top:1.5px" width="8.5" height="7" viewBox="0 0 10 8"><path d="M1 4 L3.8 6.6 L9 1.2" stroke="#fff" stroke-width="1.6" fill="none" stroke-linecap="round" stroke-linejoin="round"/></svg></div>
<div class="cb" style="left:1170.4px;top:718.3px"></div>
<div class="inp" style="left:1200.4px;top:711.1px;width:94.1px;height:26.8px"><div class="t" style="color:#333639;top:5.4px">=</div><svg style="right:8.3px;top:9.9px" width="9" height="5" viewBox="0 0 9 5"><path d="M0.5 0.5 L4.5 4.5 L8.5 0.5" stroke="#c2c2c2" stroke-width="1" fill="none"/></svg></div>
<div class="inp" style="left:1308.5px;top:711.1px;width:82.0px;height:26.8px"><div class="t" style="color:#333639;top:5.4px">居左</div><svg style="right:8.3px;top:9.9px" width="9" height="5" viewBox="0 0 9 5"><path d="M0.5 0.5 L4.5 4.5 L8.5 0.5" stroke="#c2c2c2" stroke-width="1" fill="none"/></svg></div>
<div class="inp" style="left:1403.6px;top:711.1px;width:47.2px"><div class="t">100</div></div>
<div class="abs" style="left:200.0px;top:745.0px;width:1px;height:40.5px;background:#f1f1f6"></div>
<div class="abs" style="left:236.5px;top:745.0px;width:1px;height:40.5px;background:#f1f1f6"></div>
<div class="abs" style="left:356.0px;top:745.0px;width:1px;height:40.5px;background:#f1f1f6"></div>
<div class="abs" style="left:475.0px;top:745.0px;width:1px;height:40.5px;background:#f1f1f6"></div>
<div class="abs" style="left:511.0px;top:745.0px;width:1px;height:40.5px;background:#f1f1f6"></div>
<div class="abs" style="left:547.0px;top:745.0px;width:1px;height:40.5px;background:#f1f1f6"></div>
<div class="abs" style="left:583.1px;top:745.0px;width:1px;height:40.5px;background:#f1f1f6"></div>
<div class="abs" style="left:703.0px;top:745.0px;width:1px;height:40.5px;background:#f1f1f6"></div>
<div class="abs" style="left:822.5px;top:745.0px;width:1px;height:40.5px;background:#f1f1f6"></div>
<div class="abs" style="left:942.1px;top:745.0px;width:1px;height:40.5px;background:#f1f1f6"></div>
<div class="abs" style="left:1085.3px;top:745.0px;width:1px;height:40.5px;background:#f1f1f6"></div>
<div class="abs" style="left:1121.7px;top:745.0px;width:1px;height:40.5px;background:#f1f1f6"></div>
<div class="abs" style="left:1157.7px;top:745.0px;width:1px;height:40.5px;background:#f1f1f6"></div>
<div class="abs" style="left:1193.9px;top:745.0px;width:1px;height:40.5px;background:#f1f1f6"></div>
<div class="abs" style="left:1300.8px;top:745.0px;width:1px;height:40.5px;background:#f1f1f6"></div>
<div class="abs" style="left:1396.7px;top:745.0px;width:1px;height:40.5px;background:#f1f1f6"></div>
<div class="abs" style="left:1456.5px;top:745.0px;width:1px;height:40.5px;background:#f1f1f6"></div>
<div class="abs" style="left:200.5px;top:784.9px;width:1256.5px;height:1px;background:#f1f1f6"></div>
<div class="inp" style="left:363.3px;top:751.6px;width:106.3px"><div class="t"></div></div>
<div class="inp" style="left:590.5px;top:751.6px;width:106.1px"></div>
<div class="inp" style="left:710.0px;top:751.6px;width:106.5px"></div>
<div class="inp" style="left:829.5px;top:751.6px;width:106.5px"></div>
<div class="inp" style="left:949.3px;top:751.6px;width:129.2px"></div>
<div class="inp" style="left:1200.4px;top:751.6px;width:94.1px"></div>
<div class="inp" style="left:1308.5px;top:751.6px;width:82.0px"></div>
<div class="inp" style="left:1403.9px;top:751.6px;width:46.6px"></div>
<div class="abs" style="left:381.9px;top:396.9px;width:223.4px;height:29.1px;background:#262626;border-radius:2.4px;box-shadow:0 3px 6px -4px rgba(0,0,0,.12),0 6px 16px 0 rgba(0,0,0,.08),0 9px 28px 8px rgba(0,0,0,.05)"></div>
<svg style="left:487.3px;top:425.5px" width="12" height="6" viewBox="0 0 12 6"><path d="M0 0H12L6 6Z" fill="#262626"/></svg>
<div class="t" style="left:393.2px;top:404.5px;color:rgba(255,255,255,.9);letter-spacing:.3px">该字段属性由系统维护，无需单独配置！</div>
<div class="abs" style="left:1505px;top:84px;width:8px;height:554px;background:#d9d9d9;border-radius:0 0 4px 4px"></div>
<div class="abs" style="left:168px;top:350px;width:3px;height:57px;background:#bdbdbd;border-radius:1.5px;z-index:4"></div>
<div class="abs" style="left:160px;top:715px;width:1351px;height:40px;background:linear-gradient(rgba(0,0,0,0),rgba(0,0,0,.07));z-index:5"></div>
</div></body></html>
